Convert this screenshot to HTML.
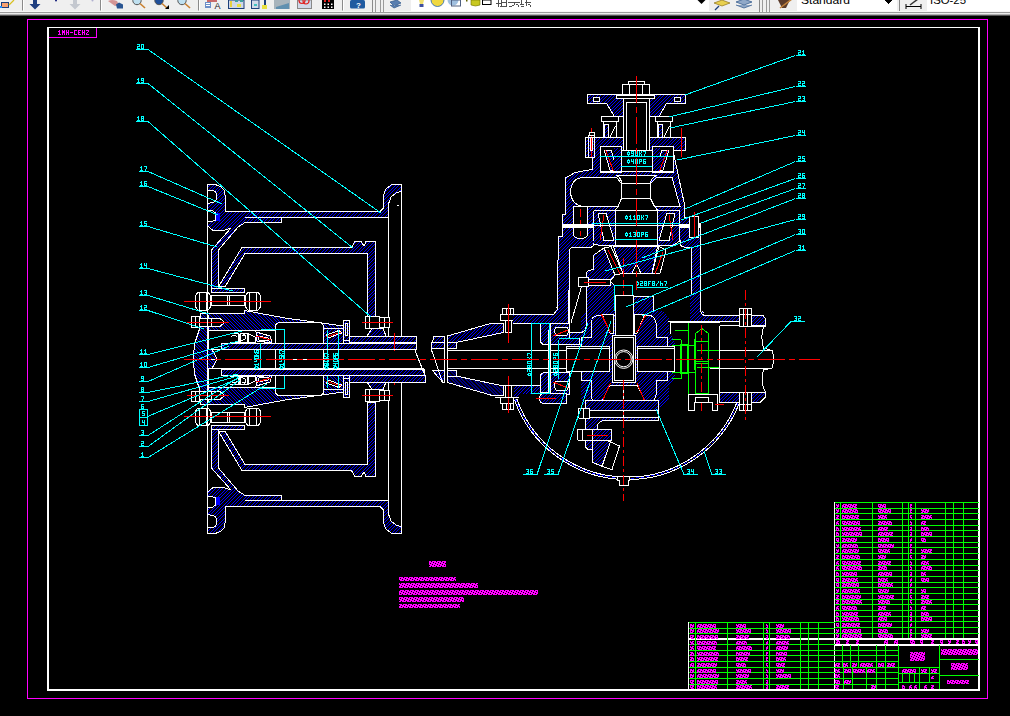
<!DOCTYPE html><html><head><meta charset="utf-8"><style>html,body{margin:0;padding:0;background:#000;overflow:hidden}svg{display:block}text{font-family:"Liberation Sans",sans-serif}</style></head><body>
<svg width="1010" height="716" viewBox="0 0 1010 716" shape-rendering="crispEdges">
<defs><pattern id="hb" patternUnits="userSpaceOnUse" width="7" height="7"><rect width="7" height="7" fill="#000"/><path d="M0,6h1v1h-1zM0,2h1v1h-1zM1,5h1v1h-1zM1,1h1v1h-1zM2,4h1v1h-1zM2,0h1v1h-1zM3,3h1v1h-1zM3,6h1v1h-1zM4,2h1v1h-1zM4,5h1v1h-1zM5,1h1v1h-1zM5,4h1v1h-1zM6,0h1v1h-1zM6,3h1v1h-1z" fill="#0000ff"/></pattern><pattern id="tm" patternUnits="userSpaceOnUse" width="5" height="5"><path d="M0,0h1v1h-1zM1,0h1v1h-1zM2,0h1v1h-1zM3,0h1v1h-1zM0,1h1v1h-1zM2,1h1v1h-1zM3,1h1v1h-1zM4,1h1v1h-1zM0,2h1v1h-1zM1,2h1v1h-1zM2,2h1v1h-1zM4,2h1v1h-1zM1,3h1v1h-1zM2,3h1v1h-1zM3,3h1v1h-1zM4,3h1v1h-1zM0,4h1v1h-1zM1,4h1v1h-1zM3,4h1v1h-1zM4,4h1v1h-1z" fill="#ff00ff"/></pattern><pattern id="hb2" patternUnits="userSpaceOnUse" width="7" height="7"><rect width="7" height="7" fill="#000"/><path d="M0,0h1v1h-1zM0,3h1v1h-1zM1,1h1v1h-1zM1,4h1v1h-1zM2,2h1v1h-1zM2,5h1v1h-1zM3,3h1v1h-1zM3,6h1v1h-1zM4,4h1v1h-1zM4,0h1v1h-1zM5,5h1v1h-1zM5,1h1v1h-1zM6,6h1v1h-1zM6,2h1v1h-1z" fill="#0000ff"/></pattern></defs>
<rect x="0" y="0" width="1010" height="716" fill="#000"/>
<rect x="0" y="0" width="1010" height="11" fill="#efefef"/>
<rect x="0" y="11" width="1010" height="1" fill="#f7f7f7"/>
<rect x="0" y="12" width="1010" height="1" fill="#9a9a9a"/>
<rect x="0" y="13" width="1010" height="1" fill="#ececec"/>
<rect x="0" y="14" width="1010" height="1" fill="#b0b0b0"/>
<rect x="0" y="15" width="1010" height="1" fill="#555555"/>
<g shape-rendering="auto">
<rect x="1" y="2" width="8" height="6" fill="#1c3f7a"/>
<rect x="2" y="3" width="6" height="4" fill="#f6a070"/>
<rect x="0" y="6" width="2" height="2" fill="#1e90ff"/>
<line x1="9" y1="5" x2="14" y2="0" stroke="#d8c020" stroke-width="1.2" />
<rect x="22" y="0" width="1" height="10.5" fill="#8a8a8a"/>
<rect x="23" y="0" width="1" height="10.5" fill="#ffffff"/>
<path d="M33,0 H37 V4 H40.5 L35,9.5 L29.5,4 H33 Z" fill="#1f3f80"/>
<circle cx="56" cy="0.5" r="1" fill="#1a237e"/>
<path d="M73,0 H77 V4 H80.5 L75,9.5 L69.5,4 H73 Z" fill="#c4c8cf"/>
<circle cx="92.5" cy="0.5" r="1" fill="#b0b0d0"/>
<rect x="100" y="0" width="1" height="10.5" fill="#8a8a8a"/>
<rect x="101" y="0" width="1" height="10.5" fill="#ffffff"/>
<path d="M108,1 Q112,-1 117,1 L119,5 L115,6 Z" fill="#d49595"/>
<path d="M116,4.5 L119,2.5 L123,4.5 L123,8.5 L117,8.5 Z" fill="#2a5592"/>
<circle cx="137" cy="0.5" r="4.2" fill="#bfe0f0" stroke="#555" stroke-width="1"/>
<line x1="140" y1="3.5" x2="145" y2="8" stroke="#c98030" stroke-width="1.6" />
<circle cx="159" cy="0.5" r="4.2" fill="#1f4f9a" stroke="#555" stroke-width="1"/>
<line x1="162" y1="3.5" x2="167" y2="8" stroke="#c98030" stroke-width="1.6" />
<circle cx="182" cy="0.5" r="4.2" fill="#bfe0f0" stroke="#555" stroke-width="1"/>
<line x1="185" y1="3.5" x2="190" y2="8" stroke="#c98030" stroke-width="1.6" />
<path d="M165,9 L169,5 L169,9 Z" fill="#000"/>
<rect x="198" y="0" width="1" height="10.5" fill="#8a8a8a"/>
<rect x="199" y="0" width="1" height="10.5" fill="#ffffff"/>
<rect x="205" y="2" width="6" height="6" fill="#6c8fc8"/>
<rect x="206" y="3" width="4" height="1" fill="#fff"/>
<rect x="206" y="5" width="4" height="1" fill="#fff"/>
<text x="214.5" y="9" font-size="9" fill="#222" font-family="Liberation Sans">A</text>
<rect x="207" y="0" width="10" height="2" fill="#c86a6a"/>
<rect x="228.5" y="0" width="15.5" height="8.5" stroke="#1c3f7a" fill="#d0d8e8"/>
<rect x="230" y="1" width="2" height="6" fill="#e8d040"/>
<rect x="237" y="4" width="4" height="3" fill="#e8e040"/>
<rect x="235" y="0" width="3" height="2" fill="#40a0a0"/>
<rect x="240" y="0" width="3" height="2" fill="#40a0a0"/>
<rect x="251.5" y="0" width="7.5" height="8.5" stroke="#1c3f7a" fill="#d0d8e8"/>
<rect x="254" y="4" width="3" height="2" fill="#40c0c0"/>
<rect x="262" y="5" width="5" height="4" fill="#e8e040"/>
<rect x="264" y="0" width="2" height="5" fill="#1c3f7a"/>
<rect x="274" y="0" width="16" height="9" fill="#a8b4bc"/>
<path d="M276,7 L289,3 L289,9 L276,9 Z" fill="#6090b0"/>
<rect x="297.5" y="0" width="14" height="8.5" stroke="#888" fill="#d0d8e8"/>
<circle cx="302" cy="0.5" r="3" fill="none" stroke="#e02020" stroke-width="1.2"/><circle cx="306" cy="1" r="3" fill="none" stroke="#e02020" stroke-width="1.2"/>
<rect x="322" y="0" width="12" height="9" fill="#000"/>
<rect x="324" y="0" width="2" height="2" fill="#e02020"/>
<rect x="328" y="0" width="2" height="2" fill="#e02020"/>
<rect x="324" y="3.5" width="1.5" height="1.5" fill="#fff"/>
<rect x="324" y="6.5" width="1.5" height="1.5" fill="#fff"/>
<rect x="327.5" y="3.5" width="1.5" height="1.5" fill="#fff"/>
<rect x="327.5" y="6.5" width="1.5" height="1.5" fill="#fff"/>
<rect x="331" y="3.5" width="1.5" height="1.5" fill="#fff"/>
<rect x="331" y="6.5" width="1.5" height="1.5" fill="#fff"/>
<rect x="342" y="0" width="1" height="10.5" fill="#8a8a8a"/>
<rect x="343" y="0" width="1" height="10.5" fill="#ffffff"/>
<rect x="350" y="0" width="15" height="8.5" rx="1.5" fill="#1f5aa0"/>
<text x="356" y="7.5" font-size="8" font-weight="bold" fill="#fff" font-family="Liberation Sans">?</text>
<rect x="372" y="0" width="1" height="12" fill="#8a8a8a"/>
<rect x="375" y="0" width="1" height="12" fill="#9a9a9a"/>
<rect x="380" y="0" width="1" height="12" fill="#9a9a9a"/>
<rect x="383" y="0" width="1" height="12" fill="#9a9a9a"/>
<path d="M390,2 L397,0 L401,3 L394,6 Z M390,5 L394,8 L401,5" fill="#5a7fb0" stroke="#3a5f90" stroke-width="0.8"/>
</g>
<rect x="411" y="0" width="298" height="11" fill="#ffffff"/>
<g shape-rendering="auto">
<path d="M419,0 H424 L423,4 H420 Z" fill="#f0e070"/>
<rect x="419.5" y="4" width="4" height="3" fill="#4050a0"/>
<circle cx="437.5" cy="0" r="6.5" fill="#f0d840" stroke="#2060b0" stroke-width="0.8"/>
<circle cx="453" cy="0" r="5.5" fill="#a0c0e0"/>
<rect x="451.5" y="0" width="9" height="6" stroke="#506080" fill="none"/>
<rect x="466" y="0" width="1.5" height="1.5" fill="#606000"/>
<path d="M471,0 H480 V5 Q475.5,7 471,5 Z" fill="#c8c820" stroke="#707000" stroke-width="0.6"/>
<rect x="482.5" y="0" width="8.5" height="4.5" stroke="#000" fill="#fff"/>
<g fill="#505050" shape-rendering="crispEdges"><rect x="498" y="0" width="1" height="6.5"/><rect x="496" y="3" width="5" height="1"/><rect x="501" y="0" width="1" height="6"/><rect x="506" y="0" width="1" height="6"/><rect x="501" y="2" width="6" height="1"/><rect x="500" y="6" width="7" height="1"/><rect x="508" y="2" width="12" height="1"/><rect x="509" y="6" width="3" height="1"/><rect x="512" y="5" width="2" height="1"/><rect x="514" y="3" width="1" height="2"/><rect x="516" y="4" width="2" height="1"/><rect x="518" y="5" width="1" height="2"/><rect x="521" y="0" width="1" height="4"/><rect x="520" y="4" width="4" height="1"/><rect x="521" y="6" width="3" height="1"/><rect x="525" y="2" width="6" height="1"/><rect x="526" y="0" width="1" height="6"/><rect x="528" y="4" width="2" height="1"/><rect x="530" y="5" width="1" height="2"/></g>
<path d="M697.5,0 H705.5 L701.5,4 Z" fill="#000"/>
<path d="M714,3 L722,0 L730,3 L722,6 Z" fill="#e8d050" stroke="#806000" stroke-width="0.6"/>
<line x1="715" y1="10" x2="719" y2="6" stroke="#1c3f7a" stroke-width="1.2" />
<path d="M736,2 L744,-1 L752,2 L744,5 Z M736,5 L744,8 L752,5" fill="#90a8c8" stroke="#3a5f90" stroke-width="0.8"/>
</g>
<rect x="759" y="0" width="1" height="12" fill="#8a8a8a"/>
<rect x="762" y="0" width="1" height="12" fill="#9a9a9a"/>
<rect x="766" y="0" width="1" height="12" fill="#9a9a9a"/>
<rect x="769" y="0" width="1" height="12" fill="#9a9a9a"/>
<g shape-rendering="auto">
<path d="M778,0 H790 L786,8 L782,8 Z" fill="#5a3a2a"/>
<line x1="780" y1="8" x2="792" y2="-1" stroke="#c0803a" stroke-width="1.5" />
</g>
<rect x="797" y="0" width="100" height="11" fill="#ffffff"/>
<text x="801" y="3.8" font-size="11" fill="#000" font-family="Liberation Mono" textLength="49" lengthAdjust="spacingAndGlyphs">Standard</text>
<path d="M884.5,0 H893 L888.8,4 Z" fill="#000"/>
<rect x="899" y="0" width="1" height="11" fill="#8a8a8a"/>
<g shape-rendering="auto">
<line x1="906" y1="6.5" x2="921" y2="6.5" stroke="#000" stroke-width="1" />
<line x1="906" y1="4" x2="906" y2="9" stroke="#000" stroke-width="1" />
<line x1="921" y1="4" x2="921" y2="9" stroke="#000" stroke-width="1" />
<line x1="910" y1="5" x2="918" y2="-1" stroke="#333" stroke-width="1.5" />
</g>
<rect x="927" y="0" width="83" height="11" fill="#ffffff"/>
<text x="930" y="3.8" font-size="11" fill="#000" font-family="Liberation Mono" textLength="36" lengthAdjust="spacingAndGlyphs">ISO-25</text>
<rect x="27.5" y="19.5" width="960" height="679" stroke="#ff00ff" fill="none"/>
<path d="M96.5,27 V37.5 H47" stroke="#ff00ff" fill="none"/>
<path d="M59,30h1v1h-1zM58,31h2v1h-2zM59,32h1v1h-1zM59,33h1v1h-1zM58,34h3v1h-3zM62,30h1v1h-1zM64,30h1v1h-1zM62,31h3v1h-3zM62,32h3v1h-3zM62,33h1v1h-1zM64,33h1v1h-1zM62,34h1v1h-1zM64,34h1v1h-1zM66,30h1v1h-1zM68,30h1v1h-1zM66,31h1v1h-1zM68,31h1v1h-1zM66,32h3v1h-3zM66,33h1v1h-1zM68,33h1v1h-1zM66,34h1v1h-1zM68,34h1v1h-1zM70,32h3v1h-3zM74,30h3v1h-3zM74,31h1v1h-1zM74,32h1v1h-1zM74,33h1v1h-1zM74,34h3v1h-3zM78,30h3v1h-3zM78,31h1v1h-1zM78,32h2v1h-2zM78,33h1v1h-1zM78,34h3v1h-3zM82,30h1v1h-1zM84,30h1v1h-1zM82,31h1v1h-1zM84,31h1v1h-1zM82,32h3v1h-3zM82,33h1v1h-1zM84,33h1v1h-1zM82,34h1v1h-1zM84,34h1v1h-1zM86,30h3v1h-3zM88,31h1v1h-1zM87,32h1v1h-1zM86,33h1v1h-1zM86,34h3v1h-3z" fill="#ff00ff"/>
<rect x="47" y="27" width="933" height="1" fill="#ffffff"/>
<rect x="47" y="27" width="2" height="664" fill="#ffffff"/>
<rect x="978" y="27" width="2" height="664" fill="#ffffff"/>
<rect x="47" y="689" width="933" height="2" fill="#ffffff"/>
<g>
<path d="M207.5,184.5 L215.5,184.5 L221,187 L224,190 L225,195 L225,211.5 L380,211.5 L383.5,208 L383.5,195 L386,189 L391,185 L401.5,184.5 L401.5,191 L396,193 L391,197 L388.5,204 L388.5,217.5 L281.5,217.5 L281.5,222.5 L245,222.5 L238,227 L218.5,250 L218.5,292 L211.5,292 L211.5,250 L231,228 L224,230.5 L213,230.5 L207.5,226 Z" stroke="#ffffff" fill="url(#hb)"/>
<path d="M207.5,190.5 L212,190.5 Q217,191 217,196.5 Q217,202 212,202.5 L207.5,203.5 Z" fill="#000" stroke="#fff"/>
<path d="M207.5,210.5 L212,210.5 L215.5,213 L215.5,220 L212,221.5 L207.5,221.5 Z" fill="#000" stroke="#fff"/>
<rect x="216" y="213" width="4" height="8" fill="#0000ff"/>
<line x1="245" y1="217.5" x2="281.5" y2="217.5" stroke="#ffffff" stroke-width="1" />
<line x1="388.5" y1="204" x2="388.5" y2="336" stroke="#ffffff" stroke-width="1" />
<line x1="401.5" y1="184.5" x2="401.5" y2="336" stroke="#ffffff" stroke-width="1" />
<path d="M218.9,286 L241.9,247.5 L351.5,247.5 L355,241.5 L361,241.5 L364,246 L366,241.5 L375.5,241.5 L375.5,316 L367.5,316 L367.5,253.5 L245,253.5 L225,287 Z" stroke="#ffffff" fill="url(#hb)"/>
<path d="M211.5,288.5 L244.5,288.5 L244.5,292.5 L211.5,292.5 Z" stroke="#ffffff" fill="url(#hb)"/>
<path d="M200.5,313.5 L244.5,313.5 L244.5,310.5 L285,318 L343.5,326 L343.5,336 L349,336 L349,343 L221,343 L221,349.5 L212,349.5 L217,359 L193.2,359 L194.5,344 L199.5,329 Z" fill="url(#hb2)" stroke="#fff"/>
<path d="M275.5,359 L275.5,327 Q275.5,322.5 280,322.5 L319,322.5 Q323.5,322.5 323.5,327 L323.5,359 Z" fill="#000" stroke="#fff"/>
<path d="M208.5,330.5 L275.5,330.5 L275.5,343 L221,343 L221,349.5 L208.5,349.5 Z" fill="#000" stroke="#fff"/>
<line x1="208.5" y1="315" x2="208.5" y2="349.5" stroke="#ffffff" stroke-width="1" />
<path d="M229.5,333.5 H238 V342 H229.5 M231,336.5 Q234,334 237,336.5 M240,333.5 H247 V342 H240 M242,336 Q245,333 246,338 Q244,341 241,340 M248.5,334 L255,337 L255,342 L248.5,342 Z" fill="none" stroke="#fff"/>
<rect x="239" y="334" width="1" height="8" stroke="#ffffff" fill="url(#hb)"/>
<path d="M256,332 L270,336 L272,343 L257,341 Z" fill="url(#hb)" stroke="#fff"/>
<path d="M258,336 L268,338 L269,341 L259,340 Z" fill="#000" stroke="#fff"/>
<line x1="256" y1="336" x2="271" y2="340" stroke="#ff0000" stroke-width="1" />
<path d="M343.5,320.5 L349.5,320.5 L349.5,340 L343.5,340 Z" fill="url(#hb)" stroke="#fff"/>
<rect x="345.5" y="323.5" width="2" height="12" stroke="#ffffff" fill="none"/>
<rect x="349.5" y="336" width="67" height="6.5" stroke="#ffffff" fill="url(#hb)"/>
<rect x="221" y="343" width="195.5" height="6.5" stroke="#ffffff" fill="url(#hb)"/>
<path d="M323.5,328.5 L343.5,328.5 L343.5,343 L323.5,343 Z" fill="url(#hb)" stroke="#fff"/>
<path d="M326,335 L339,330.5 L342,333 L328,338 Z" fill="#000" stroke="#fff"/>
<line x1="326" y1="337" x2="341" y2="332" stroke="#ff0000" stroke-width="1" />
<path d="M198,292.5 L208,292.5 Q211,294 211,301.2 Q211,308.5 208,310 L198,310 Q195,308.5 195,301.2 Q195,294 198,292.5 Z" fill="#000" stroke="#fff"/>
<line x1="199.5" y1="292.5" x2="199.5" y2="310" stroke="#ffffff" stroke-width="1" />
<line x1="206.5" y1="292.5" x2="206.5" y2="310" stroke="#ffffff" stroke-width="1" />
<rect x="211.5" y="295.5" width="33" height="10" stroke="#ffffff" fill="#000"/>
<line x1="227.5" y1="295.5" x2="227.5" y2="305.5" stroke="#ffffff" stroke-width="1" />
<line x1="229.5" y1="295.5" x2="229.5" y2="305.5" stroke="#ffffff" stroke-width="1" />
<path d="M248,292.5 L258,292.5 Q261,294 261,301.2 Q261,308.5 258,310 L248,310 Q245,308.5 245,301.2 Q245,294 248,292.5 Z" fill="#000" stroke="#fff"/>
<line x1="249.5" y1="292.5" x2="249.5" y2="310" stroke="#ffffff" stroke-width="1" />
<line x1="256.5" y1="292.5" x2="256.5" y2="310" stroke="#ffffff" stroke-width="1" />
<line x1="184" y1="301.5" x2="271" y2="301.5" stroke="#ff0000" stroke-width="1" />
<rect x="191.5" y="316.5" width="8" height="10.5" stroke="#ffffff" fill="#000"/>
<line x1="195.5" y1="316.5" x2="195.5" y2="327" stroke="#ffffff" stroke-width="1" />
<path d="M199.5,318.5 L220,318.5 L224.5,322.5 L220,326.5 L199.5,326.5 Z" fill="#000" stroke="#fff"/>
<line x1="211.5" y1="318.5" x2="211.5" y2="326.5" stroke="#ffffff" stroke-width="1" />
<line x1="187" y1="322.5" x2="229" y2="322.5" stroke="#ff0000" stroke-width="1" />
<rect x="365.5" y="316.5" width="13.5" height="12" stroke="#ffffff" fill="#000"/>
<rect x="379" y="317.5" width="10" height="10" stroke="#ffffff" fill="#000"/>
<line x1="369.5" y1="316.5" x2="369.5" y2="328.5" stroke="#ffffff" stroke-width="1" />
<line x1="384.5" y1="317.5" x2="384.5" y2="327.5" stroke="#ffffff" stroke-width="1" />
<line x1="362" y1="322.5" x2="393" y2="322.5" stroke="#ff0000" stroke-width="1" />
<path d="M367,336 L372,328.5 L383,328.5 L386,336 Z" stroke="#ffffff" fill="url(#hb)"/>
<line x1="394.5" y1="333" x2="394.5" y2="350.5" stroke="#ff0000" stroke-width="1" />
<line x1="260.5" y1="329.5" x2="284.5" y2="329.5" stroke="#00ffff" stroke-width="1" />
<line x1="260.5" y1="343" x2="260.5" y2="359" stroke="#00ffff" stroke-width="1" />
<line x1="284.5" y1="330" x2="284.5" y2="359" stroke="#00ffff" stroke-width="1" />
<line x1="327.5" y1="330" x2="327.5" y2="359" stroke="#00ffff" stroke-width="1" />
<line x1="338.5" y1="330" x2="338.5" y2="359" stroke="#00ffff" stroke-width="1" />
</g><g transform="matrix(1 0 0 -1 0 718)">
<path d="M207.5,184.5 L215.5,184.5 L221,187 L224,190 L225,195 L225,211.5 L380,211.5 L383.5,208 L383.5,195 L386,189 L391,185 L401.5,184.5 L401.5,191 L396,193 L391,197 L388.5,204 L388.5,217.5 L281.5,217.5 L281.5,222.5 L245,222.5 L238,227 L218.5,250 L218.5,292 L211.5,292 L211.5,250 L231,228 L224,230.5 L213,230.5 L207.5,226 Z" stroke="#ffffff" fill="url(#hb2)"/>
<path d="M207.5,190.5 L212,190.5 Q217,191 217,196.5 Q217,202 212,202.5 L207.5,203.5 Z" fill="#000" stroke="#fff"/>
<path d="M207.5,210.5 L212,210.5 L215.5,213 L215.5,220 L212,221.5 L207.5,221.5 Z" fill="#000" stroke="#fff"/>
<rect x="216" y="213" width="4" height="8" fill="#0000ff"/>
<line x1="245" y1="217.5" x2="281.5" y2="217.5" stroke="#ffffff" stroke-width="1" />
<line x1="388.5" y1="204" x2="388.5" y2="336" stroke="#ffffff" stroke-width="1" />
<line x1="401.5" y1="184.5" x2="401.5" y2="336" stroke="#ffffff" stroke-width="1" />
<path d="M218.9,286 L241.9,247.5 L351.5,247.5 L355,241.5 L361,241.5 L364,246 L366,241.5 L375.5,241.5 L375.5,316 L367.5,316 L367.5,253.5 L245,253.5 L225,287 Z" stroke="#ffffff" fill="url(#hb2)"/>
<path d="M211.5,288.5 L244.5,288.5 L244.5,292.5 L211.5,292.5 Z" stroke="#ffffff" fill="url(#hb2)"/>
<path d="M200.5,313.5 L244.5,313.5 L244.5,310.5 L285,318 L343.5,326 L343.5,336 L349,336 L349,343 L221,343 L221,349.5 L212,349.5 L217,359 L193.2,359 L194.5,344 L199.5,329 Z" fill="url(#hb)" stroke="#fff"/>
<path d="M275.5,359 L275.5,327 Q275.5,322.5 280,322.5 L319,322.5 Q323.5,322.5 323.5,327 L323.5,359 Z" fill="#000" stroke="#fff"/>
<path d="M208.5,330.5 L275.5,330.5 L275.5,343 L221,343 L221,349.5 L208.5,349.5 Z" fill="#000" stroke="#fff"/>
<line x1="208.5" y1="315" x2="208.5" y2="349.5" stroke="#ffffff" stroke-width="1" />
<path d="M229.5,333.5 H238 V342 H229.5 M231,336.5 Q234,334 237,336.5 M240,333.5 H247 V342 H240 M242,336 Q245,333 246,338 Q244,341 241,340 M248.5,334 L255,337 L255,342 L248.5,342 Z" fill="none" stroke="#fff"/>
<rect x="239" y="334" width="1" height="8" stroke="#ffffff" fill="url(#hb2)"/>
<path d="M256,332 L270,336 L272,343 L257,341 Z" fill="url(#hb)" stroke="#fff"/>
<path d="M258,336 L268,338 L269,341 L259,340 Z" fill="#000" stroke="#fff"/>
<line x1="256" y1="336" x2="271" y2="340" stroke="#ff0000" stroke-width="1" />
<path d="M343.5,320.5 L349.5,320.5 L349.5,340 L343.5,340 Z" fill="url(#hb)" stroke="#fff"/>
<rect x="345.5" y="323.5" width="2" height="12" stroke="#ffffff" fill="none"/>
<rect x="349.5" y="336" width="67" height="6.5" stroke="#ffffff" fill="url(#hb2)"/>
<rect x="221" y="343" width="195.5" height="6.5" stroke="#ffffff" fill="url(#hb2)"/>
<path d="M323.5,328.5 L343.5,328.5 L343.5,343 L323.5,343 Z" fill="url(#hb)" stroke="#fff"/>
<path d="M326,335 L339,330.5 L342,333 L328,338 Z" fill="#000" stroke="#fff"/>
<line x1="326" y1="337" x2="341" y2="332" stroke="#ff0000" stroke-width="1" />
<path d="M198,292.5 L208,292.5 Q211,294 211,301.2 Q211,308.5 208,310 L198,310 Q195,308.5 195,301.2 Q195,294 198,292.5 Z" fill="#000" stroke="#fff"/>
<line x1="199.5" y1="292.5" x2="199.5" y2="310" stroke="#ffffff" stroke-width="1" />
<line x1="206.5" y1="292.5" x2="206.5" y2="310" stroke="#ffffff" stroke-width="1" />
<rect x="211.5" y="295.5" width="33" height="10" stroke="#ffffff" fill="#000"/>
<line x1="227.5" y1="295.5" x2="227.5" y2="305.5" stroke="#ffffff" stroke-width="1" />
<line x1="229.5" y1="295.5" x2="229.5" y2="305.5" stroke="#ffffff" stroke-width="1" />
<path d="M248,292.5 L258,292.5 Q261,294 261,301.2 Q261,308.5 258,310 L248,310 Q245,308.5 245,301.2 Q245,294 248,292.5 Z" fill="#000" stroke="#fff"/>
<line x1="249.5" y1="292.5" x2="249.5" y2="310" stroke="#ffffff" stroke-width="1" />
<line x1="256.5" y1="292.5" x2="256.5" y2="310" stroke="#ffffff" stroke-width="1" />
<line x1="184" y1="301.5" x2="271" y2="301.5" stroke="#ff0000" stroke-width="1" />
<rect x="191.5" y="316.5" width="8" height="10.5" stroke="#ffffff" fill="#000"/>
<line x1="195.5" y1="316.5" x2="195.5" y2="327" stroke="#ffffff" stroke-width="1" />
<path d="M199.5,318.5 L220,318.5 L224.5,322.5 L220,326.5 L199.5,326.5 Z" fill="#000" stroke="#fff"/>
<line x1="211.5" y1="318.5" x2="211.5" y2="326.5" stroke="#ffffff" stroke-width="1" />
<line x1="187" y1="322.5" x2="229" y2="322.5" stroke="#ff0000" stroke-width="1" />
<rect x="365.5" y="316.5" width="13.5" height="12" stroke="#ffffff" fill="#000"/>
<rect x="379" y="317.5" width="10" height="10" stroke="#ffffff" fill="#000"/>
<line x1="369.5" y1="316.5" x2="369.5" y2="328.5" stroke="#ffffff" stroke-width="1" />
<line x1="384.5" y1="317.5" x2="384.5" y2="327.5" stroke="#ffffff" stroke-width="1" />
<line x1="362" y1="322.5" x2="393" y2="322.5" stroke="#ff0000" stroke-width="1" />
<path d="M367,336 L372,328.5 L383,328.5 L386,336 Z" stroke="#ffffff" fill="url(#hb2)"/>
<line x1="394.5" y1="333" x2="394.5" y2="350.5" stroke="#ff0000" stroke-width="1" />
<line x1="260.5" y1="329.5" x2="284.5" y2="329.5" stroke="#00ffff" stroke-width="1" />
<line x1="260.5" y1="343" x2="260.5" y2="359" stroke="#00ffff" stroke-width="1" />
<line x1="284.5" y1="330" x2="284.5" y2="359" stroke="#00ffff" stroke-width="1" />
<line x1="327.5" y1="330" x2="327.5" y2="359" stroke="#00ffff" stroke-width="1" />
<line x1="338.5" y1="330" x2="338.5" y2="359" stroke="#00ffff" stroke-width="1" />
</g>
<line x1="207.5" y1="184.5" x2="207.5" y2="534" stroke="#ffffff" stroke-width="1" />
<rect x="397" y="205" width="2" height="1" fill="#ffffff"/>
<line x1="216" y1="349.5" x2="416" y2="349.5" stroke="#ffffff" stroke-width="1" />
<line x1="216" y1="368.5" x2="424" y2="368.5" stroke="#ffffff" stroke-width="1" />
<rect x="349.5" y="375.5" width="75.5" height="6.5" stroke="#ffffff" fill="url(#hb)"/>
<rect x="221" y="369" width="203.5" height="6.5" stroke="#ffffff" fill="url(#hb)"/>
<line x1="415" y1="350.5" x2="425" y2="375.5" stroke="#ffffff" stroke-width="1" />
<line x1="184" y1="359.5" x2="820" y2="359.5" stroke="#ff0000" stroke-dasharray="27,4,6,4"/>
<path d="M1,0h1v1h-1zM0,1h3v1h-3zM0,2h1v1h-1zM2,2h1v1h-1zM0,3h3v1h-3zM1,4h1v1h-1zM4.3,0h1v1h-1zM3.3,1h2v1h-2zM4.3,2h1v1h-1zM4.3,3h1v1h-1zM3.3,4h3v1h-3zM6.6,0h1v1h-1zM8.6,0h1v1h-1zM6.6,1h1v1h-1zM8.6,1h1v1h-1zM6.6,2h3v1h-3zM8.6,3h1v1h-1zM8.6,4h1v1h-1zM9.899999999999999,0h3v1h-3zM9.899999999999999,1h1v1h-1zM11.899999999999999,1h1v1h-1zM9.899999999999999,2h1v1h-1zM11.899999999999999,2h1v1h-1zM9.899999999999999,3h1v1h-1zM11.899999999999999,3h1v1h-1zM9.899999999999999,4h3v1h-3zM13.2,0h1v1h-1zM13.2,1h1v1h-1zM15.2,1h1v1h-1zM13.2,2h2v1h-2zM13.2,3h1v1h-1zM15.2,3h1v1h-1zM13.2,4h1v1h-1zM15.2,4h1v1h-1zM16.5,0h3v1h-3zM16.5,1h1v1h-1zM16.5,2h3v1h-3zM16.5,3h1v1h-1zM18.5,3h1v1h-1zM16.5,4h3v1h-3z" fill="#00ffff" transform="translate(254,369) rotate(-90)"/>
<path d="M1,0h1v1h-1zM0,1h3v1h-3zM0,2h1v1h-1zM2,2h1v1h-1zM0,3h3v1h-3zM1,4h1v1h-1zM4.3,0h1v1h-1zM3.3,1h2v1h-2zM4.3,2h1v1h-1zM4.3,3h1v1h-1zM3.3,4h3v1h-3zM6.6,0h1v1h-1zM8.6,0h1v1h-1zM6.6,1h1v1h-1zM8.6,1h1v1h-1zM6.6,2h3v1h-3zM8.6,3h1v1h-1zM8.6,4h1v1h-1zM9.899999999999999,0h3v1h-3zM9.899999999999999,1h1v1h-1zM9.899999999999999,2h3v1h-3zM11.899999999999999,3h1v1h-1zM9.899999999999999,4h3v1h-3zM13.2,0h1v1h-1zM15.2,0h1v1h-1zM13.2,1h1v1h-1zM15.2,1h1v1h-1zM13.2,2h2v1h-2zM13.2,3h1v1h-1zM15.2,3h1v1h-1zM13.2,4h1v1h-1zM15.2,4h1v1h-1zM16.5,0h3v1h-3zM18.5,1h1v1h-1zM18.5,2h1v1h-1zM17.5,3h1v1h-1zM17.5,4h1v1h-1z" fill="#00ffff" transform="translate(279,369) rotate(-90)"/>
<path d="M1,0h1v1h-1zM0,1h3v1h-3zM0,2h1v1h-1zM2,2h1v1h-1zM0,3h3v1h-3zM1,4h1v1h-1zM3.3,0h3v1h-3zM3.3,1h1v1h-1zM5.3,1h1v1h-1zM3.3,2h3v1h-3zM3.3,3h1v1h-1zM5.3,3h1v1h-1zM3.3,4h3v1h-3zM6.6,0h3v1h-3zM6.6,1h1v1h-1zM8.6,1h1v1h-1zM6.6,2h1v1h-1zM8.6,2h1v1h-1zM6.6,3h1v1h-1zM8.6,3h1v1h-1zM6.6,4h3v1h-3zM9.899999999999999,0h1v1h-1zM11.899999999999999,0h1v1h-1zM9.899999999999999,1h1v1h-1zM11.899999999999999,1h1v1h-1zM9.899999999999999,2h2v1h-2zM9.899999999999999,3h1v1h-1zM11.899999999999999,3h1v1h-1zM9.899999999999999,4h1v1h-1zM11.899999999999999,4h1v1h-1zM13.2,0h3v1h-3zM15.2,1h1v1h-1zM15.2,2h1v1h-1zM14.2,3h1v1h-1zM14.2,4h1v1h-1z" fill="#00ffff" transform="translate(324,369) rotate(-90)"/>
<path d="M1,0h1v1h-1zM0,1h3v1h-3zM0,2h1v1h-1zM2,2h1v1h-1zM0,3h3v1h-3zM1,4h1v1h-1zM3.3,0h1v1h-1zM5.3,0h1v1h-1zM3.3,1h1v1h-1zM5.3,1h1v1h-1zM3.3,2h3v1h-3zM5.3,3h1v1h-1zM5.3,4h1v1h-1zM6.6,0h3v1h-3zM6.6,1h1v1h-1zM8.6,1h1v1h-1zM6.6,2h1v1h-1zM8.6,2h1v1h-1zM6.6,3h1v1h-1zM8.6,3h1v1h-1zM6.6,4h3v1h-3zM9.899999999999999,0h3v1h-3zM9.899999999999999,1h1v1h-1zM11.899999999999999,1h1v1h-1zM9.899999999999999,2h3v1h-3zM9.899999999999999,3h1v1h-1zM9.899999999999999,4h1v1h-1zM13.2,0h3v1h-3zM13.2,1h1v1h-1zM13.2,2h3v1h-3zM13.2,3h1v1h-1zM15.2,3h1v1h-1zM13.2,4h3v1h-3z" fill="#00ffff" transform="translate(333,369) rotate(-90)"/>
<line x1="136" y1="49.5" x2="148.5" y2="49.5" stroke="#00ffff" stroke-width="1" />
<path d="M137,44h3v1h-3zM139,45h1v1h-1zM137,46h3v1h-3zM137,47h1v1h-1zM137,48h3v1h-3zM141,44h3v1h-3zM141,45h1v1h-1zM143,45h1v1h-1zM141,46h1v1h-1zM143,46h1v1h-1zM141,47h1v1h-1zM143,47h1v1h-1zM141,48h3v1h-3z" fill="#00ffff"/>
<line x1="148" y1="49.5" x2="381" y2="213" stroke="#00ffff" stroke-width="1" />
<line x1="136" y1="83.5" x2="148.5" y2="83.5" stroke="#00ffff" stroke-width="1" />
<path d="M138,78h1v1h-1zM137,79h2v1h-2zM138,80h1v1h-1zM138,81h1v1h-1zM137,82h3v1h-3zM141,78h3v1h-3zM141,79h1v1h-1zM143,79h1v1h-1zM141,80h3v1h-3zM143,81h1v1h-1zM141,82h3v1h-3z" fill="#00ffff"/>
<line x1="148" y1="83.5" x2="353" y2="248" stroke="#00ffff" stroke-width="1" />
<line x1="136" y1="121.5" x2="148.5" y2="121.5" stroke="#00ffff" stroke-width="1" />
<path d="M138,116h1v1h-1zM137,117h2v1h-2zM138,118h1v1h-1zM138,119h1v1h-1zM137,120h3v1h-3zM141,116h3v1h-3zM141,117h1v1h-1zM143,117h1v1h-1zM141,118h3v1h-3zM141,119h1v1h-1zM143,119h1v1h-1zM141,120h3v1h-3z" fill="#00ffff"/>
<line x1="148" y1="121.5" x2="371" y2="317" stroke="#00ffff" stroke-width="1" />
<line x1="139" y1="171.5" x2="148.5" y2="171.5" stroke="#00ffff" stroke-width="1" />
<path d="M141,166h1v1h-1zM140,167h2v1h-2zM141,168h1v1h-1zM141,169h1v1h-1zM140,170h3v1h-3zM144,166h3v1h-3zM146,167h1v1h-1zM146,168h1v1h-1zM145,169h1v1h-1zM145,170h1v1h-1z" fill="#00ffff"/>
<line x1="148" y1="171.5" x2="222" y2="204" stroke="#00ffff" stroke-width="1" />
<line x1="139" y1="186.5" x2="148.5" y2="186.5" stroke="#00ffff" stroke-width="1" />
<path d="M141,181h1v1h-1zM140,182h2v1h-2zM141,183h1v1h-1zM141,184h1v1h-1zM140,185h3v1h-3zM144,181h3v1h-3zM144,182h1v1h-1zM144,183h3v1h-3zM144,184h1v1h-1zM146,184h1v1h-1zM144,185h3v1h-3z" fill="#00ffff"/>
<line x1="148" y1="186.5" x2="218" y2="215" stroke="#00ffff" stroke-width="1" />
<line x1="139" y1="226.5" x2="148.5" y2="226.5" stroke="#00ffff" stroke-width="1" />
<path d="M141,221h1v1h-1zM140,222h2v1h-2zM141,223h1v1h-1zM141,224h1v1h-1zM140,225h3v1h-3zM144,221h3v1h-3zM144,222h1v1h-1zM144,223h3v1h-3zM146,224h1v1h-1zM144,225h3v1h-3z" fill="#00ffff"/>
<line x1="148" y1="226.5" x2="217" y2="247" stroke="#00ffff" stroke-width="1" />
<line x1="139" y1="268.5" x2="148.5" y2="268.5" stroke="#00ffff" stroke-width="1" />
<path d="M141,263h1v1h-1zM140,264h2v1h-2zM141,265h1v1h-1zM141,266h1v1h-1zM140,267h3v1h-3zM144,263h1v1h-1zM146,263h1v1h-1zM144,264h1v1h-1zM146,264h1v1h-1zM144,265h3v1h-3zM146,266h1v1h-1zM146,267h1v1h-1z" fill="#00ffff"/>
<line x1="148" y1="268.5" x2="233" y2="291" stroke="#00ffff" stroke-width="1" />
<line x1="139" y1="295.5" x2="148.5" y2="295.5" stroke="#00ffff" stroke-width="1" />
<path d="M141,290h1v1h-1zM140,291h2v1h-2zM141,292h1v1h-1zM141,293h1v1h-1zM140,294h3v1h-3zM144,290h3v1h-3zM146,291h1v1h-1zM145,292h2v1h-2zM146,293h1v1h-1zM144,294h3v1h-3z" fill="#00ffff"/>
<line x1="148" y1="295.5" x2="209" y2="314" stroke="#00ffff" stroke-width="1" />
<line x1="139" y1="310.5" x2="148.5" y2="310.5" stroke="#00ffff" stroke-width="1" />
<path d="M141,305h1v1h-1zM140,306h2v1h-2zM141,307h1v1h-1zM141,308h1v1h-1zM140,309h3v1h-3zM144,305h3v1h-3zM146,306h1v1h-1zM144,307h3v1h-3zM144,308h1v1h-1zM144,309h3v1h-3z" fill="#00ffff"/>
<line x1="148" y1="310.5" x2="204" y2="329" stroke="#00ffff" stroke-width="1" />
<line x1="139" y1="354.5" x2="148.5" y2="354.5" stroke="#00ffff" stroke-width="1" />
<path d="M141,349h1v1h-1zM140,350h2v1h-2zM141,351h1v1h-1zM141,352h1v1h-1zM140,353h3v1h-3zM145,349h1v1h-1zM144,350h2v1h-2zM145,351h1v1h-1zM145,352h1v1h-1zM144,353h3v1h-3z" fill="#00ffff"/>
<line x1="148" y1="354.5" x2="242" y2="331" stroke="#00ffff" stroke-width="1" />
<line x1="139" y1="367.5" x2="148.5" y2="367.5" stroke="#00ffff" stroke-width="1" />
<path d="M141,362h1v1h-1zM140,363h2v1h-2zM141,364h1v1h-1zM141,365h1v1h-1zM140,366h3v1h-3zM144,362h3v1h-3zM144,363h1v1h-1zM146,363h1v1h-1zM144,364h1v1h-1zM146,364h1v1h-1zM144,365h1v1h-1zM146,365h1v1h-1zM144,366h3v1h-3z" fill="#00ffff"/>
<line x1="148" y1="367.5" x2="238" y2="341" stroke="#00ffff" stroke-width="1" />
<line x1="139" y1="381.5" x2="148.5" y2="381.5" stroke="#00ffff" stroke-width="1" />
<path d="M141,376h3v1h-3zM141,377h1v1h-1zM143,377h1v1h-1zM141,378h3v1h-3zM143,379h1v1h-1zM141,380h3v1h-3z" fill="#00ffff"/>
<line x1="148" y1="381.5" x2="229" y2="346" stroke="#00ffff" stroke-width="1" />
<line x1="139" y1="392.5" x2="148.5" y2="392.5" stroke="#00ffff" stroke-width="1" />
<path d="M141,387h3v1h-3zM141,388h1v1h-1zM143,388h1v1h-1zM141,389h3v1h-3zM141,390h1v1h-1zM143,390h1v1h-1zM141,391h3v1h-3z" fill="#00ffff"/>
<line x1="148" y1="392.5" x2="238" y2="374" stroke="#00ffff" stroke-width="1" />
<line x1="139" y1="401.5" x2="148.5" y2="401.5" stroke="#00ffff" stroke-width="1" />
<path d="M141,396h3v1h-3zM143,397h1v1h-1zM143,398h1v1h-1zM142,399h1v1h-1zM142,400h1v1h-1z" fill="#00ffff"/>
<line x1="148" y1="401.5" x2="238" y2="376" stroke="#00ffff" stroke-width="1" />
<line x1="139" y1="435.5" x2="148.5" y2="435.5" stroke="#00ffff" stroke-width="1" />
<path d="M141,430h3v1h-3zM143,431h1v1h-1zM142,432h2v1h-2zM143,433h1v1h-1zM141,434h3v1h-3z" fill="#00ffff"/>
<line x1="148" y1="435.5" x2="239" y2="377" stroke="#00ffff" stroke-width="1" />
<line x1="139" y1="446.5" x2="148.5" y2="446.5" stroke="#00ffff" stroke-width="1" />
<path d="M141,441h3v1h-3zM143,442h1v1h-1zM141,443h3v1h-3zM141,444h1v1h-1zM141,445h3v1h-3z" fill="#00ffff"/>
<line x1="148" y1="446.5" x2="240" y2="380" stroke="#00ffff" stroke-width="1" />
<line x1="139" y1="457.5" x2="148.5" y2="457.5" stroke="#00ffff" stroke-width="1" />
<path d="M142,452h1v1h-1zM141,453h2v1h-2zM142,454h1v1h-1zM142,455h1v1h-1zM141,456h3v1h-3z" fill="#00ffff"/>
<line x1="148" y1="457.5" x2="267" y2="384" stroke="#00ffff" stroke-width="1" />
<rect x="139.5" y="409.5" width="8" height="16" stroke="#00ffff" fill="none"/>
<line x1="139.5" y1="417.5" x2="147.5" y2="417.5" stroke="#00ffff" stroke-width="1" />
<path d="M141,404h3v1h-3zM141,405h1v1h-1zM141,406h3v1h-3zM141,407h1v1h-1zM143,407h1v1h-1zM141,408h3v1h-3z" fill="#00ffff"/>
<path d="M142,411h3v1h-3zM142,412h1v1h-1zM142,413h3v1h-3zM144,414h1v1h-1zM142,415h3v1h-3z" fill="#00ffff"/>
<path d="M142,419.5h1v1h-1zM144,419.5h1v1h-1zM142,420.5h1v1h-1zM144,420.5h1v1h-1zM142,421.5h3v1h-3zM144,422.5h1v1h-1zM144,423.5h1v1h-1z" fill="#00ffff"/>
<line x1="147.5" y1="416.5" x2="238" y2="378.6" stroke="#00ffff" stroke-width="1" />
<rect x="628.5" y="81.5" width="16" height="3" stroke="#ffffff" fill="#000"/>
<rect x="622.5" y="84.5" width="27" height="11" stroke="#ffffff" fill="#000"/>
<line x1="629.5" y1="84.5" x2="629.5" y2="95.5" stroke="#ffffff" stroke-width="1" />
<line x1="642.5" y1="84.5" x2="642.5" y2="95.5" stroke="#ffffff" stroke-width="1" />
<path d="M587.5,94.5 L685.5,94.5 L685.5,103.5 L666.5,103.5 L659,116.5 L649.5,116.5 L649.5,98.5 L623.5,98.5 L623.5,116.5 L614.5,116.5 L606.5,103.5 L587.5,103.5 Z" stroke="#ffffff" fill="url(#hb)"/>
<rect x="616.5" y="95.5" width="38" height="3" stroke="#ffffff" fill="#000"/>
<rect x="593.5" y="97.5" width="6" height="4" stroke="#ffffff" fill="#000"/>
<rect x="674.5" y="97.5" width="6" height="4" stroke="#ffffff" fill="#000"/>
<path d="M623.5,98.5 L649.5,98.5 L649.5,150.5 L623.5,150.5 Z" fill="#000" stroke="#fff"/>
<line x1="626.5" y1="102" x2="626.5" y2="150.5" stroke="#ffffff" stroke-width="1" />
<line x1="646.5" y1="102" x2="646.5" y2="150.5" stroke="#ffffff" stroke-width="1" />
<line x1="626.5" y1="102.5" x2="646.5" y2="102.5" stroke="#ffffff" stroke-width="1" />
<rect x="601.5" y="116.5" width="17" height="5" stroke="#ffffff" fill="#000"/>
<rect x="603.5" y="121.5" width="13" height="20" stroke="#ffffff" fill="#000"/>
<rect x="604.5" y="124" width="4" height="16" stroke="#ffffff" fill="url(#hb)"/>
<line x1="608.5" y1="140" x2="615.5" y2="126" stroke="#ffffff" stroke-width="1" />
<rect x="655.5" y="116.5" width="17" height="5" stroke="#ffffff" fill="#000"/>
<rect x="657.5" y="121.5" width="13" height="20" stroke="#ffffff" fill="#000"/>
<rect x="658.5" y="124" width="4" height="16" stroke="#ffffff" fill="url(#hb)"/>
<line x1="662.5" y1="140" x2="669.5" y2="126" stroke="#ffffff" stroke-width="1" />
<path d="M585.5,137.5 L685.5,137.5 L685.5,150.5 L673,150.5 L684.5,204.5 L684.5,217.5 L689.5,217.5 L689.5,223.5 L700.5,223.5 L700.5,309 L706,317 L712,320.5 L719,320.5 L719,322.5 L670,322.5 L670,336 L570,336 L569.5,322 L557,308 L558.5,236.5 L562,236.5 L562,214.5 L565.5,214.5 L565.5,178 L575,172.5 L592,169.5 L592,157 L585.5,157 Z" stroke="#ffffff" fill="url(#hb)"/>
<path d="M620.5,150.5 L652.5,150.5 L652.5,172 L620.5,172 Z" fill="#000" stroke="none"/>
<path d="M623.5,137 L649.5,137 L649.5,150.5 L623.5,150.5 Z" fill="#000" stroke="none"/>
<line x1="623.5" y1="137" x2="623.5" y2="150.5" stroke="#ffffff" stroke-width="1" />
<line x1="649.5" y1="137" x2="649.5" y2="150.5" stroke="#ffffff" stroke-width="1" />
<line x1="626.5" y1="137" x2="626.5" y2="150.5" stroke="#ffffff" stroke-width="1" />
<line x1="646.5" y1="137" x2="646.5" y2="150.5" stroke="#ffffff" stroke-width="1" />
<line x1="618.5" y1="150.5" x2="654.5" y2="150.5" stroke="#ffffff" stroke-width="1" />
<line x1="600.5" y1="146" x2="600.5" y2="157" stroke="#00ffff" stroke-width="1" />
<line x1="672.5" y1="146" x2="672.5" y2="157" stroke="#00ffff" stroke-width="1" />
<line x1="621" y1="160" x2="621" y2="167" stroke="#00ffff" stroke-width="1" />
<line x1="652" y1="160" x2="652" y2="167" stroke="#00ffff" stroke-width="1" />
<path d="M600.5,146.5 L621.0,146.5 L621.0,172 L600.5,172 Z" fill="#000" stroke="#fff"/>
<path d="M652.5,146.5 L673.0,146.5 L673.0,172 L652.5,172 Z" fill="#000" stroke="#fff"/>
<path d="M604,150 L611,150 L617,170 L610,170 Z" fill="url(#hb)" stroke="#fff"/>
<path d="M669,150 L662,150 L656,170 L663,170 Z" fill="url(#hb)" stroke="#fff"/>
<rect x="614" y="148" width="6.5" height="23" stroke="none" fill="url(#hb)"/>
<rect x="653" y="148" width="6.5" height="23" stroke="none" fill="url(#hb)"/>
<line x1="605.5" y1="150" x2="613.5" y2="171" stroke="#ff0000" stroke-width="1" />
<line x1="667.5" y1="150" x2="659.5" y2="171" stroke="#ff0000" stroke-width="1" />
<line x1="591.5" y1="128" x2="591.5" y2="157" stroke="#ff0000" stroke-width="1" />
<line x1="681.5" y1="128" x2="681.5" y2="157" stroke="#ff0000" stroke-width="1" />
<rect x="589.5" y="132.5" width="5" height="3" stroke="#ffffff" fill="#000"/>
<rect x="588.5" y="135.5" width="6" height="22" stroke="#ffffff" fill="none"/>
<rect x="590.5" y="137.5" width="2" height="13" stroke="#ffffff" fill="none"/>
<line x1="600" y1="171.5" x2="673" y2="171.5" stroke="#ffffff" stroke-width="1" />
<line x1="617" y1="175.5" x2="656" y2="175.5" stroke="#ffffff" stroke-width="1" />
<path d="M582,177.5 L616.5,177.5 L621.5,183.5 L621.5,198.5 L618,206.5 L582,206.5 Q571,204 570.5,192 Q571,179 582,177.5 Z" fill="#000" stroke="#fff"/>
<path d="M656.5,177.5 L672,177.5 L680,206.5 L654.5,206.5 L650.5,198.5 L650.5,183.5 Z" fill="#000" stroke="#fff"/>
<path d="M616.5,175.5 Q621.5,178 621.5,183.5 L650.5,183.5 Q650.5,178 656.5,175.5 Z" fill="#000" stroke="#fff"/>
<rect x="621.5" y="183.5" width="29" height="15" stroke="#ffffff" fill="#000"/>
<path d="M621.5,198.5 L650.5,198.5 L654.5,206.5 L658,210.5 L615,210.5 L618,206.5 Z" fill="#000" stroke="#fff"/>
<path d="M573.5,206.5 L587.5,206.5 L587.5,234 Q587.5,238.5 580.5,238.5 Q573.5,238.5 573.5,234 Z" fill="#000" stroke="#fff"/>
<line x1="580.5" y1="209" x2="580.5" y2="236" stroke="#ff0000" stroke-width="1" stroke-dasharray="8,3"/>
<line x1="593.5" y1="210.5" x2="679.5" y2="210.5" stroke="#ffffff" stroke-width="1" />
<line x1="593.5" y1="210.5" x2="593.5" y2="241" stroke="#ffffff" stroke-width="1" />
<line x1="679.5" y1="210.5" x2="679.5" y2="241" stroke="#ffffff" stroke-width="1" />
<path d="M615.5,210.5 L657.5,210.5 L657.5,245.5 L615.5,245.5 Z" fill="#000" stroke="#fff"/>
<path d="M598,213 L606,213 L614,240 L604,241 Z" fill="#000" stroke="#fff"/>
<path d="M675,213 L667,213 L659,240 L669,241 Z" fill="#000" stroke="#fff"/>
<line x1="604" y1="215" x2="600" y2="240" stroke="#ff0000" stroke-width="1" />
<line x1="669" y1="215" x2="673" y2="240" stroke="#ff0000" stroke-width="1" />
<line x1="600.5" y1="245.5" x2="672.5" y2="245.5" stroke="#ffffff" stroke-width="1" />
<rect x="561.5" y="223.5" width="32" height="4" fill="#ffffff"/>
<rect x="679.5" y="223.5" width="21" height="4" fill="#ffffff"/>
<line x1="593.5" y1="225.5" x2="679.5" y2="225.5" stroke="#ffffff" stroke-width="1" />
<path d="M569.5,250 Q569.5,247.5 575,247.5 L590,247.5 Q593.5,247 593.5,244 L600.5,245.5 L672.5,245.5 L680,241 L680,245 Q683,248 691.5,248 L691.5,318 Q693,322 700,322.5 L670,322.5 L670,336 L570,336 Z" fill="#000" stroke="#fff"/>
<rect x="689.5" y="216.5" width="9" height="21" stroke="#ffffff" fill="#000"/>
<line x1="694" y1="212" x2="694" y2="238" stroke="#ff0000" stroke-width="1" />
<path d="M613.5,246.5 L657.5,246.5 L652,273.5 L623,273.5 Z" stroke="#ffffff" fill="url(#hb)"/>
<path d="M632,273.5 L636.5,264 L641,273.5 Z" fill="#000" stroke="#fff"/>
<path d="M604,248 L611,246.5 L623,273.5 L615,275 Z" fill="#000" stroke="#fff"/>
<path d="M666,250 L659,246.5 L652,273.5 L660,273.5 Z" fill="#000" stroke="#fff"/>
<line x1="608" y1="250" x2="620" y2="274" stroke="#ff0000" stroke-width="1" />
<line x1="663" y1="252" x2="655" y2="274" stroke="#ff0000" stroke-width="1" />
<path d="M569,332 L586,332 L586,346 L569,346 Z" stroke="none" fill="url(#hb)"/>
<path d="M569,332.5 L580.5,332.5 Q585.5,332 586,327" fill="none" stroke="#fff"/>
<path d="M593.8,255 L604,248 L615,275 L610,281 L614.5,285.5 L614.5,336 L586,336 L586,276 Q586,270.5 591,270 L593.8,269.5 Z" fill="url(#hb)" stroke="#fff"/>
<line x1="581.5" y1="286.5" x2="571" y2="323" stroke="#ffffff" stroke-width="1" />
<path d="M632.5,296.5 L653.5,296.5 L653.5,313 L660,318 L662,336 L632.5,336 Z" stroke="#ffffff" fill="url(#hb)"/>
<line x1="614.5" y1="296.5" x2="653.5" y2="296.5" stroke="#ffffff" stroke-width="1" />
<line x1="623.5" y1="258" x2="623.5" y2="335" stroke="#ff0000" stroke-dasharray="8,3"/>
<rect x="578.5" y="277.5" width="10" height="9" stroke="#ffffff" fill="#000"/>
<rect x="588.5" y="279.5" width="22" height="6" stroke="#ffffff" fill="#000"/>
<line x1="584" y1="282.5" x2="606" y2="282.5" stroke="#ff0000" stroke-width="1" />
<rect x="614.5" y="285.5" width="18" height="50" stroke="#00ffff" fill="none"/>
<path d="M637,281h1v1h-1zM636,282h3v1h-3zM636,283h1v1h-1zM638,283h1v1h-1zM636,284h3v1h-3zM637,285h1v1h-1zM640,281h3v1h-3zM642,282h1v1h-1zM640,283h3v1h-3zM640,284h1v1h-1zM640,285h3v1h-3zM644,281h3v1h-3zM644,282h1v1h-1zM646,282h1v1h-1zM644,283h3v1h-3zM644,284h1v1h-1zM646,284h1v1h-1zM644,285h3v1h-3zM648,281h3v1h-3zM648,282h1v1h-1zM648,283h2v1h-2zM648,284h1v1h-1zM648,285h1v1h-1zM652,281h3v1h-3zM652,282h1v1h-1zM654,282h1v1h-1zM652,283h3v1h-3zM652,284h1v1h-1zM654,284h1v1h-1zM652,285h3v1h-3zM658,281h1v1h-1zM658,282h1v1h-1zM657,283h1v1h-1zM656,284h1v1h-1zM656,285h1v1h-1zM660,281h1v1h-1zM660,282h1v1h-1zM660,283h3v1h-3zM660,284h1v1h-1zM662,284h1v1h-1zM660,285h1v1h-1zM662,285h1v1h-1zM664,281h3v1h-3zM666,282h1v1h-1zM666,283h1v1h-1zM665,284h1v1h-1zM665,285h1v1h-1z" fill="#00ffff"/>
<line x1="636" y1="287.5" x2="668" y2="287.5" stroke="#00ffff" stroke-width="1" />
<line x1="600" y1="156.5" x2="673" y2="156.5" stroke="#00ffff" stroke-width="1" />
<line x1="621" y1="166.5" x2="652" y2="166.5" stroke="#00ffff" stroke-width="1" />
<path d="M628,151h1v1h-1zM627,152h3v1h-3zM627,153h1v1h-1zM629,153h1v1h-1zM627,154h3v1h-3zM628,155h1v1h-1zM631,151h3v1h-3zM631,152h1v1h-1zM633,152h1v1h-1zM631,153h3v1h-3zM633,154h1v1h-1zM631,155h3v1h-3zM635,151h3v1h-3zM635,152h1v1h-1zM637,152h1v1h-1zM635,153h1v1h-1zM637,153h1v1h-1zM635,154h1v1h-1zM637,154h1v1h-1zM635,155h3v1h-3zM639,151h1v1h-1zM641,151h1v1h-1zM639,152h1v1h-1zM641,152h1v1h-1zM639,153h2v1h-2zM639,154h1v1h-1zM641,154h1v1h-1zM639,155h1v1h-1zM641,155h1v1h-1zM643,151h3v1h-3zM645,152h1v1h-1zM645,153h1v1h-1zM644,154h1v1h-1zM644,155h1v1h-1z" fill="#00ffff"/>
<path d="M628,159h1v1h-1zM627,160h3v1h-3zM627,161h1v1h-1zM629,161h1v1h-1zM627,162h3v1h-3zM628,163h1v1h-1zM631,159h1v1h-1zM633,159h1v1h-1zM631,160h1v1h-1zM633,160h1v1h-1zM631,161h3v1h-3zM633,162h1v1h-1zM633,163h1v1h-1zM635,159h3v1h-3zM635,160h1v1h-1zM637,160h1v1h-1zM635,161h1v1h-1zM637,161h1v1h-1zM635,162h1v1h-1zM637,162h1v1h-1zM635,163h3v1h-3zM639,159h3v1h-3zM639,160h1v1h-1zM641,160h1v1h-1zM639,161h3v1h-3zM639,162h1v1h-1zM639,163h1v1h-1zM643,159h3v1h-3zM643,160h1v1h-1zM643,161h3v1h-3zM643,162h1v1h-1zM645,162h1v1h-1zM643,163h3v1h-3z" fill="#00ffff"/>
<line x1="592" y1="223.5" x2="680" y2="223.5" stroke="#00ffff" stroke-width="1" />
<line x1="615" y1="239.5" x2="657" y2="239.5" stroke="#00ffff" stroke-width="1" />
<path d="M626,215h1v1h-1zM625,216h3v1h-3zM625,217h1v1h-1zM627,217h1v1h-1zM625,218h3v1h-3zM626,219h1v1h-1zM630,215h1v1h-1zM629,216h2v1h-2zM630,217h1v1h-1zM630,218h1v1h-1zM629,219h3v1h-3zM634,215h1v1h-1zM633,216h2v1h-2zM634,217h1v1h-1zM634,218h1v1h-1zM633,219h3v1h-3zM637,215h3v1h-3zM637,216h1v1h-1zM639,216h1v1h-1zM637,217h1v1h-1zM639,217h1v1h-1zM637,218h1v1h-1zM639,218h1v1h-1zM637,219h3v1h-3zM641,215h1v1h-1zM643,215h1v1h-1zM641,216h1v1h-1zM643,216h1v1h-1zM641,217h2v1h-2zM641,218h1v1h-1zM643,218h1v1h-1zM641,219h1v1h-1zM643,219h1v1h-1zM645,215h3v1h-3zM647,216h1v1h-1zM647,217h1v1h-1zM646,218h1v1h-1zM646,219h1v1h-1z" fill="#00ffff"/>
<path d="M626,232h1v1h-1zM625,233h3v1h-3zM625,234h1v1h-1zM627,234h1v1h-1zM625,235h3v1h-3zM626,236h1v1h-1zM630,232h1v1h-1zM629,233h2v1h-2zM630,234h1v1h-1zM630,235h1v1h-1zM629,236h3v1h-3zM633,232h3v1h-3zM635,233h1v1h-1zM634,234h2v1h-2zM635,235h1v1h-1zM633,236h3v1h-3zM637,232h3v1h-3zM637,233h1v1h-1zM639,233h1v1h-1zM637,234h1v1h-1zM639,234h1v1h-1zM637,235h1v1h-1zM639,235h1v1h-1zM637,236h3v1h-3zM641,232h3v1h-3zM641,233h1v1h-1zM643,233h1v1h-1zM641,234h3v1h-3zM641,235h1v1h-1zM641,236h1v1h-1zM645,232h3v1h-3zM645,233h1v1h-1zM645,234h3v1h-3zM645,235h1v1h-1zM647,235h1v1h-1zM645,236h3v1h-3z" fill="#00ffff"/>
<line x1="636.5" y1="76" x2="636.5" y2="290" stroke="#ff0000" stroke-dasharray="27,4,6,4"/>
<g>
<path d="M447.5,336 L490.5,323.5 L503.5,323.5 L503.5,332.5 L456,342.5 L447.5,342.5 Z" stroke="#ffffff" fill="url(#hb)"/>
<rect x="447.5" y="342.5" width="8.5" height="6" stroke="#ffffff" fill="url(#hb)"/>
<line x1="447.5" y1="350.5" x2="620" y2="350.5" stroke="#ffffff" stroke-width="1" />
</g><g transform="matrix(1 0 0 -1 0 718.5)">
<path d="M447.5,336 L490.5,323.5 L503.5,323.5 L503.5,332.5 L456,342.5 L447.5,342.5 Z" stroke="#ffffff" fill="url(#hb)"/>
<rect x="447.5" y="342.5" width="8.5" height="6" stroke="#ffffff" fill="url(#hb)"/>
<line x1="447.5" y1="350.5" x2="620" y2="350.5" stroke="#ffffff" stroke-width="1" />
</g>
<path d="M434,336 L444,336 L444,348.5 L431,348.5 L431,347 L434,336 Z" stroke="#ffffff" fill="url(#hb)"/>
<line x1="431" y1="342.5" x2="444" y2="342.5" stroke="#ffffff" stroke-width="1" />
<path d="M432,370 L444,370 L444,382 L442.5,382 Z" stroke="#ffffff" fill="url(#hb)"/>
<line x1="431" y1="348.5" x2="442.5" y2="382" stroke="#ffffff" stroke-width="1" />
<line x1="444.5" y1="336" x2="444.5" y2="382" stroke="#ffffff" stroke-width="1" />
<line x1="447.5" y1="336" x2="447.5" y2="382" stroke="#ffffff" stroke-width="1" />
<rect x="502.5" y="308.5" width="11" height="6" stroke="#ffffff" fill="#000"/>
<line x1="506" y1="308.5" x2="506" y2="314.5" stroke="#ffffff" stroke-width="1" />
<line x1="510" y1="308.5" x2="510" y2="314.5" stroke="#ffffff" stroke-width="1" />
<rect x="500.5" y="314.5" width="13" height="6" stroke="#ffffff" fill="#000"/>
<rect x="505.5" y="320.5" width="6" height="12" stroke="#ffffff" fill="#000"/>
<line x1="508.5" y1="304" x2="508.5" y2="343" stroke="#ff0000" stroke-width="1" />
<rect x="505.5" y="385.5" width="6" height="12" stroke="#ffffff" fill="#000"/>
<rect x="500.5" y="397.5" width="13" height="6" stroke="#ffffff" fill="#000"/>
<rect x="502.5" y="403.5" width="11" height="6" stroke="#ffffff" fill="#000"/>
<line x1="506" y1="403.5" x2="506" y2="409.5" stroke="#ffffff" stroke-width="1" />
<line x1="510" y1="403.5" x2="510" y2="409.5" stroke="#ffffff" stroke-width="1" />
<line x1="508.5" y1="376" x2="508.5" y2="413" stroke="#ff0000" stroke-width="1" />
<path d="M512.5,314.5 L553.5,314.5 L557.5,309 L557.5,290 L568.5,290 L568.5,323.5 L512.5,323.5 Z" stroke="none" fill="url(#hb)"/>
<path d="M512.5,314.5 L553.5,314.5 L557.5,309 L557.5,290" stroke="#ffffff" fill="none" />
<line x1="568.5" y1="290" x2="568.5" y2="336" stroke="#ffffff" stroke-width="1" />
<line x1="512.5" y1="323.5" x2="549" y2="323.5" stroke="#ffffff" stroke-width="1" />
<path d="M513.5,385.5 L542.5,385.5 L542.5,393.5 L518.5,393.5 L518.5,398 L513.5,398 Z" stroke="none" fill="url(#hb)"/>
<line x1="503" y1="385.5" x2="542.5" y2="385.5" stroke="#ffffff" stroke-width="1" />
<line x1="495" y1="397.5" x2="518.5" y2="397.5" stroke="#ffffff" stroke-width="1" />
<path d="M540.5,323.5 L550,323.5 L550,344.5 L545,344.5 Q540.5,344.5 540.5,340 Z" fill="url(#hb)" stroke="#fff"/>
<path d="M540.5,392.5 L550,392.5 L550,372.5 L545,372.5 Q540.5,372.5 540.5,377 Z" fill="url(#hb)" stroke="#fff"/>
<line x1="548.5" y1="330" x2="548.5" y2="392" stroke="#ffffff" stroke-width="1" />
<line x1="550.5" y1="323.5" x2="550.5" y2="395" stroke="#ffffff" stroke-width="1" />
<path d="M550.5,323.5 L569.5,323.5 L569.5,338.5 L579,338.5 L579,344.5 L550.5,344.5 Z" stroke="#ffffff" fill="url(#hb)"/>
<path d="M556,327 L567,327 Q570,331 567,335 L556,335 Q553,331 556,327 Z" fill="#000" stroke="#fff"/>
<line x1="553" y1="336" x2="568" y2="330" stroke="#ff0000" stroke-width="1" />
<path d="M550.5,372.5 L569.5,372.5 L569.5,394 L550.5,394 Z" stroke="#ffffff" fill="url(#hb)"/>
<path d="M556,381 L567,381 Q570,386 567,390 L556,390 Q553,386 556,381 Z" fill="#000" stroke="#fff"/>
<line x1="553" y1="382" x2="568" y2="388" stroke="#ff0000" stroke-width="1" />
<path d="M544,393.5 L566,393.5 L566,403.5 L544,403.5 Q539.5,403.5 539.5,398.5 Q539.5,393.5 544,393.5 Z" fill="url(#hb)" stroke="#fff"/>
<line x1="536" y1="398.5" x2="556" y2="398.5" stroke="#ff0000" stroke-width="1" />
<rect x="531.5" y="323.5" width="18" height="70" stroke="#00ffff" fill="none"/>
<line x1="558.5" y1="339.5" x2="558.5" y2="379" stroke="#00ffff" stroke-width="1" />
<line x1="558.5" y1="338.5" x2="579" y2="338.5" stroke="#00ffff" stroke-width="1" />
<path d="M1,0h1v1h-1zM0,1h3v1h-3zM0,2h1v1h-1zM2,2h1v1h-1zM0,3h3v1h-3zM1,4h1v1h-1zM4,0h3v1h-3zM6,1h1v1h-1zM4,2h3v1h-3zM4,3h1v1h-1zM4,4h3v1h-3zM8,0h3v1h-3zM8,1h1v1h-1zM10,1h1v1h-1zM8,2h3v1h-3zM8,3h1v1h-1zM10,3h1v1h-1zM8,4h3v1h-3zM12,0h3v1h-3zM12,1h1v1h-1zM14,1h1v1h-1zM12,2h1v1h-1zM14,2h1v1h-1zM12,3h1v1h-1zM14,3h1v1h-1zM12,4h3v1h-3zM16,0h1v1h-1zM18,0h1v1h-1zM16,1h1v1h-1zM18,1h1v1h-1zM16,2h2v1h-2zM16,3h1v1h-1zM18,3h1v1h-1zM16,4h1v1h-1zM18,4h1v1h-1zM20,0h3v1h-3zM22,1h1v1h-1zM22,2h1v1h-1zM21,3h1v1h-1zM21,4h1v1h-1z" fill="#00ffff" transform="translate(527,376) rotate(-90)"/>
<path d="M1,0h1v1h-1zM0,1h3v1h-3zM0,2h1v1h-1zM2,2h1v1h-1zM0,3h3v1h-3zM1,4h1v1h-1zM4,0h3v1h-3zM6,1h1v1h-1zM4,2h3v1h-3zM4,3h1v1h-1zM4,4h3v1h-3zM8,0h3v1h-3zM8,1h1v1h-1zM10,1h1v1h-1zM8,2h3v1h-3zM8,3h1v1h-1zM10,3h1v1h-1zM8,4h3v1h-3zM12,0h3v1h-3zM12,1h1v1h-1zM14,1h1v1h-1zM12,2h1v1h-1zM14,2h1v1h-1zM12,3h1v1h-1zM14,3h1v1h-1zM12,4h3v1h-3zM16,0h3v1h-3zM16,1h1v1h-1zM18,1h1v1h-1zM16,2h3v1h-3zM16,3h1v1h-1zM16,4h1v1h-1zM20,0h3v1h-3zM20,1h1v1h-1zM20,2h3v1h-3zM20,3h1v1h-1zM22,3h1v1h-1zM20,4h3v1h-3z" fill="#00ffff" transform="translate(553,376) rotate(-90)"/>
<path d="M581,346 L581,318 Q583,311 592,311 L660,311 Q668,312 669,320 L669,333 Q675,337 675,345 L675,373 Q675,383 669,387 L669,398 Q667,408 655,408 L592,408 Q583,407 581,400 L581,372 Z" fill="url(#hb)" stroke="none"/>
<line x1="586" y1="300" x2="586" y2="327" stroke="#ffffff" stroke-width="1" />
<path d="M569,332.5 L580.5,332.5 Q585.5,332 586,327" fill="none" stroke="#fff"/>
<path d="M591.5,319.5 Q593,315 603.5,315 L615,315 M633,315 L648.5,315 Q656,316 656.5,326.5 L656.5,337.5 L667.5,337.5 L667.5,346 M581,346 L581,337.5 L591.5,337.5 L591.5,319.5" fill="none" stroke="#fff"/>
<path d="M581,371.5 L581,380.5 L591.5,380.5 L591.5,398 Q593,403 603.5,403.5 L648.5,403.5 Q656,402 656.5,392 L656.5,380.5 L667.5,380.5 L667.5,371.5" fill="none" stroke="#fff"/>
<rect x="566.5" y="346.5" width="43" height="25" stroke="#ffffff" fill="#000"/>
<line x1="567" y1="348.5" x2="609" y2="348.5" stroke="#ffffff" stroke-width="1" />
<rect x="637.5" y="346.5" width="37" height="25" stroke="#ffffff" fill="#000"/>
<line x1="638" y1="348.5" x2="674" y2="348.5" stroke="#ffffff" stroke-width="1" />
<rect x="615.5" y="295.5" width="17.5" height="40" stroke="#ffffff" fill="#000"/>
<rect x="612.5" y="335.5" width="23" height="46.5" stroke="#ffffff" fill="#000"/>
<rect x="614.5" y="337.5" width="19" height="42.5" stroke="#ffffff" fill="none"/>
<circle cx="623.7" cy="359.2" r="9.2" fill="#000" stroke="#fff" shape-rendering="auto"/>
<circle cx="623.7" cy="359.2" r="7.6" fill="none" stroke="#fff" shape-rendering="auto"/>
<path d="M602,314 L613,314 L613,333 L610,333 Z" fill="#000" stroke="#fff"/>
<path d="M645,314 L634,314 L634,333 L637,333 Z" fill="#000" stroke="#fff"/>
<path d="M610,385 L637,385 L646,403.5 L601,403.5 Z" fill="#000" stroke="#fff"/>
<line x1="623.5" y1="382" x2="623.5" y2="403.5" stroke="#ffffff" stroke-width="1" />
<line x1="601.5" y1="314.5" x2="610.5" y2="332.5" stroke="#ff0000" stroke-width="1" />
<line x1="645.5" y1="315.5" x2="636.5" y2="332.5" stroke="#ff0000" stroke-width="1" />
<line x1="610.5" y1="383" x2="601.5" y2="403" stroke="#ff0000" stroke-width="1" />
<line x1="637" y1="383" x2="645.5" y2="403" stroke="#ff0000" stroke-width="1" />
<path d="M690,295 L700.5,295 L700.5,309 L706,316 L738.5,316 L738.5,321.5 L690,321.5 Z" stroke="none" fill="url(#hb)"/>
<line x1="668" y1="321.5" x2="738.5" y2="321.5" stroke="#ffffff" stroke-width="1" />
<path d="M700.5,295 L700.5,309 Q701,315.5 706,315.5 L738.5,315.5" fill="none" stroke="#fff"/>
<path d="M751.5,315.5 L763,315.5 L765.5,319 L765.5,326 L751.5,326 Z" stroke="#ffffff" fill="url(#hb)"/>
<line x1="719.5" y1="325.5" x2="719.5" y2="392.5" stroke="#ffffff" stroke-width="1" />
<path d="M719.5,325.5 L764,325.5 Q760,336 763.5,348 L772,350.5 Q775,359 772,368 L763.5,370 Q760,382 765.5,392.5 L719.5,392.5" fill="none" stroke="#fff"/>
<line x1="710" y1="350.5" x2="772" y2="350.5" stroke="#ffffff" stroke-width="1" />
<line x1="710" y1="368.5" x2="772" y2="368.5" stroke="#ffffff" stroke-width="1" />
<path d="M719.5,392.5 L765.5,392.5 L765.5,397 L760,402.5 L719.5,402.5 Z" stroke="#ffffff" fill="url(#hb)"/>
<rect x="739.5" y="308.5" width="12" height="17.5" stroke="#ffffff" fill="#000"/>
<line x1="743.5" y1="308.5" x2="743.5" y2="326" stroke="#ffffff" stroke-width="1" />
<line x1="747.5" y1="308.5" x2="747.5" y2="326" stroke="#ffffff" stroke-width="1" />
<line x1="739.5" y1="314.5" x2="751.5" y2="314.5" stroke="#ffffff" stroke-width="1" />
<rect x="739.5" y="392.5" width="12" height="18" stroke="#ffffff" fill="#000"/>
<line x1="743.5" y1="392.5" x2="743.5" y2="410.5" stroke="#ffffff" stroke-width="1" />
<line x1="747.5" y1="392.5" x2="747.5" y2="410.5" stroke="#ffffff" stroke-width="1" />
<line x1="739.5" y1="404.5" x2="751.5" y2="404.5" stroke="#ffffff" stroke-width="1" />
<line x1="745.5" y1="290" x2="745.5" y2="420" stroke="#ff0000" stroke-dasharray="10,3,3,3"/>
<g stroke="#00ff00" fill="none">
<path d="M688.5,322.5 V395.5 M675,330.5 H688.5 M681,339.5 V378.5 M672,339.5 H681 M672,345.5 H695 M672,372.5 H695 M672,378.5 H681 M695.5,339.5 V372.5"/>
<path d="M681,345 H688 V373 H681 Z M695,339 V370" stroke-width="2"/>
<path d="M695.5,393.5 V333.5 L702,328.5 L708.5,333.5 V393.5 Z M695.5,341.5 H708.5 M695.5,361.5 H708.5 M695.5,363.5 H708.5 M697,350.5 H718.5 M697,367.5 H718.5"/>
</g>
<line x1="701.5" y1="325" x2="701.5" y2="412" stroke="#ff0000" stroke-dasharray="10,3,3,3"/>
<path d="M688.5,394.5 H717 V410.5 H712 V402 H694 V410.5 H688.5 Z" fill="#000" stroke="#fff"/>
<rect x="695.5" y="397.5" width="13" height="5" stroke="#ffffff" fill="none"/>
<line x1="715" y1="404.5" x2="724" y2="404.5" stroke="#ff0000" stroke-width="1" />
<path d="M585.5,400 L658.5,400 L658.5,420.5 L604,420.5 Q598,421 597,427 L597,429.5 L592.5,429.5 L592.5,449.5 L589,449.5 Q585.5,449 585.5,445 Z" fill="url(#hb)" stroke="#fff"/>
<rect x="589.5" y="410.5" width="69" height="6.5" stroke="#ffffff" fill="#000"/>
<line x1="623.5" y1="410.5" x2="623.5" y2="417" stroke="#ffffff" stroke-width="1" />
<path d="M579,408.5 L589.5,408.5 L589.5,418 L579,418 Q577,413 579,408.5 Z" fill="#000" stroke="#fff"/>
<line x1="583.5" y1="408.5" x2="583.5" y2="418" stroke="#ffffff" stroke-width="1" />
<path d="M592.5,429.5 L611,429.5 L611,440 L605.5,440 L610.5,442 L602,466 L592.5,462.5 Z" stroke="#ffffff" fill="url(#hb)"/>
<path d="M610.5,442 L619.5,446 L612,469.5 L602,466.5 Z" fill="#000" stroke="#fff"/>
<path d="M578,429.5 L592.5,429.5 L592.5,440 L578,440 Q576,435 578,429.5 Z" fill="#000" stroke="#fff"/>
<line x1="582.5" y1="429.5" x2="582.5" y2="440" stroke="#ffffff" stroke-width="1" />
<rect x="592.5" y="429.5" width="18.5" height="10.5" stroke="#ffffff" fill="none"/>
<line x1="587" y1="435.5" x2="608" y2="435.5" stroke="#ff0000" stroke-width="1" />
<path d="M514.38,399.66 A120,120 0 0 0 739.19,403.47" fill="none" stroke="#fff"/>
<path d="M515.56,399.24 A118.75,118.75 0 0 0 738.03,403.01" fill="none" stroke="#0000ff" stroke-dasharray="3,2"/>
<path d="M516.74,398.83 A117.5,117.5 0 0 0 736.87,402.55" fill="none" stroke="#fff"/>
<path d="M617.5,476.5 H629.5 V480.5 H628.5 V485.5 H619.5 V480.5 H617.5 Z" fill="#000" stroke="#fff"/>
<line x1="623.5" y1="380" x2="623.5" y2="501" stroke="#ff0000" stroke-dasharray="10,3,3,3"/>
<line x1="795.5" y1="55.5" x2="806" y2="55.5" stroke="#00ffff" stroke-width="1" />
<path d="M798,50h3v1h-3zM800,51h1v1h-1zM798,52h3v1h-3zM798,53h1v1h-1zM798,54h3v1h-3zM803,50h1v1h-1zM802,51h2v1h-2zM803,52h1v1h-1zM803,53h1v1h-1zM802,54h3v1h-3z" fill="#00ffff"/>
<line x1="795.5" y1="55.5" x2="685" y2="95" stroke="#00ffff" stroke-width="1" />
<line x1="795.5" y1="86.5" x2="806" y2="86.5" stroke="#00ffff" stroke-width="1" />
<path d="M798,81h3v1h-3zM800,82h1v1h-1zM798,83h3v1h-3zM798,84h1v1h-1zM798,85h3v1h-3zM802,81h3v1h-3zM804,82h1v1h-1zM802,83h3v1h-3zM802,84h1v1h-1zM802,85h3v1h-3z" fill="#00ffff"/>
<line x1="795.5" y1="86.5" x2="669" y2="117" stroke="#00ffff" stroke-width="1" />
<line x1="795.5" y1="101.5" x2="806" y2="101.5" stroke="#00ffff" stroke-width="1" />
<path d="M798,96h3v1h-3zM800,97h1v1h-1zM798,98h3v1h-3zM798,99h1v1h-1zM798,100h3v1h-3zM802,96h3v1h-3zM804,97h1v1h-1zM803,98h2v1h-2zM804,99h1v1h-1zM802,100h3v1h-3z" fill="#00ffff"/>
<line x1="795.5" y1="101.5" x2="670" y2="128" stroke="#00ffff" stroke-width="1" />
<line x1="795.5" y1="135.5" x2="806" y2="135.5" stroke="#00ffff" stroke-width="1" />
<path d="M798,130h3v1h-3zM800,131h1v1h-1zM798,132h3v1h-3zM798,133h1v1h-1zM798,134h3v1h-3zM802,130h1v1h-1zM804,130h1v1h-1zM802,131h1v1h-1zM804,131h1v1h-1zM802,132h3v1h-3zM804,133h1v1h-1zM804,134h1v1h-1z" fill="#00ffff"/>
<line x1="795.5" y1="135.5" x2="677" y2="160" stroke="#00ffff" stroke-width="1" />
<line x1="795.5" y1="161.5" x2="806" y2="161.5" stroke="#00ffff" stroke-width="1" />
<path d="M798,156h3v1h-3zM800,157h1v1h-1zM798,158h3v1h-3zM798,159h1v1h-1zM798,160h3v1h-3zM802,156h3v1h-3zM802,157h1v1h-1zM802,158h3v1h-3zM804,159h1v1h-1zM802,160h3v1h-3z" fill="#00ffff"/>
<line x1="795.5" y1="161.5" x2="685" y2="209" stroke="#00ffff" stroke-width="1" />
<line x1="795.5" y1="178.5" x2="806" y2="178.5" stroke="#00ffff" stroke-width="1" />
<path d="M798,173h3v1h-3zM800,174h1v1h-1zM798,175h3v1h-3zM798,176h1v1h-1zM798,177h3v1h-3zM802,173h3v1h-3zM802,174h1v1h-1zM802,175h3v1h-3zM802,176h1v1h-1zM804,176h1v1h-1zM802,177h3v1h-3z" fill="#00ffff"/>
<line x1="795.5" y1="178.5" x2="681" y2="220" stroke="#00ffff" stroke-width="1" />
<line x1="795.5" y1="188.5" x2="806" y2="188.5" stroke="#00ffff" stroke-width="1" />
<path d="M798,183h3v1h-3zM800,184h1v1h-1zM798,185h3v1h-3zM798,186h1v1h-1zM798,187h3v1h-3zM802,183h3v1h-3zM804,184h1v1h-1zM804,185h1v1h-1zM803,186h1v1h-1zM803,187h1v1h-1z" fill="#00ffff"/>
<line x1="795.5" y1="188.5" x2="701" y2="223" stroke="#00ffff" stroke-width="1" />
<line x1="795.5" y1="198.5" x2="806" y2="198.5" stroke="#00ffff" stroke-width="1" />
<path d="M798,193h3v1h-3zM800,194h1v1h-1zM798,195h3v1h-3zM798,196h1v1h-1zM798,197h3v1h-3zM802,193h3v1h-3zM802,194h1v1h-1zM804,194h1v1h-1zM802,195h3v1h-3zM802,196h1v1h-1zM804,196h1v1h-1zM802,197h3v1h-3z" fill="#00ffff"/>
<line x1="795.5" y1="198.5" x2="642" y2="258" stroke="#00ffff" stroke-width="1" />
<line x1="795.5" y1="219.5" x2="806" y2="219.5" stroke="#00ffff" stroke-width="1" />
<path d="M798,214h3v1h-3zM800,215h1v1h-1zM798,216h3v1h-3zM798,217h1v1h-1zM798,218h3v1h-3zM802,214h3v1h-3zM802,215h1v1h-1zM804,215h1v1h-1zM802,216h3v1h-3zM804,217h1v1h-1zM802,218h3v1h-3z" fill="#00ffff"/>
<line x1="795.5" y1="219.5" x2="605" y2="271" stroke="#00ffff" stroke-width="1" />
<line x1="795.5" y1="234.5" x2="806" y2="234.5" stroke="#00ffff" stroke-width="1" />
<path d="M798,229h3v1h-3zM800,230h1v1h-1zM799,231h2v1h-2zM800,232h1v1h-1zM798,233h3v1h-3zM802,229h3v1h-3zM802,230h1v1h-1zM804,230h1v1h-1zM802,231h1v1h-1zM804,231h1v1h-1zM802,232h1v1h-1zM804,232h1v1h-1zM802,233h3v1h-3z" fill="#00ffff"/>
<line x1="795.5" y1="234.5" x2="626" y2="307" stroke="#00ffff" stroke-width="1" />
<line x1="795.5" y1="250.5" x2="806" y2="250.5" stroke="#00ffff" stroke-width="1" />
<path d="M798,245h3v1h-3zM800,246h1v1h-1zM799,247h2v1h-2zM800,248h1v1h-1zM798,249h3v1h-3zM803,245h1v1h-1zM802,246h2v1h-2zM803,247h1v1h-1zM803,248h1v1h-1zM802,249h3v1h-3z" fill="#00ffff"/>
<line x1="795.5" y1="250.5" x2="642" y2="316" stroke="#00ffff" stroke-width="1" />
<line x1="791" y1="321.5" x2="805" y2="321.5" stroke="#00ffff" stroke-width="1" />
<path d="M794,316h3v1h-3zM796,317h1v1h-1zM795,318h2v1h-2zM796,319h1v1h-1zM794,320h3v1h-3zM798,316h3v1h-3zM800,317h1v1h-1zM798,318h3v1h-3zM798,319h1v1h-1zM798,320h3v1h-3z" fill="#00ffff"/>
<line x1="791" y1="321.5" x2="757" y2="357" stroke="#00ffff" stroke-width="1" />
<line x1="523" y1="474.5" x2="537" y2="474.5" stroke="#00ffff" stroke-width="1" />
<path d="M526,469h3v1h-3zM528,470h1v1h-1zM527,471h2v1h-2zM528,472h1v1h-1zM526,473h3v1h-3zM530,469h3v1h-3zM530,470h1v1h-1zM530,471h3v1h-3zM530,472h1v1h-1zM532,472h1v1h-1zM530,473h3v1h-3z" fill="#00ffff"/>
<line x1="537" y1="474.5" x2="588" y2="323" stroke="#00ffff" stroke-width="1" />
<line x1="544" y1="474.5" x2="558" y2="474.5" stroke="#00ffff" stroke-width="1" />
<path d="M547,469h3v1h-3zM549,470h1v1h-1zM548,471h2v1h-2zM549,472h1v1h-1zM547,473h3v1h-3zM551,469h3v1h-3zM551,470h1v1h-1zM551,471h3v1h-3zM553,472h1v1h-1zM551,473h3v1h-3z" fill="#00ffff"/>
<line x1="558" y1="474.5" x2="611" y2="321" stroke="#00ffff" stroke-width="1" />
<line x1="684" y1="474.5" x2="698" y2="474.5" stroke="#00ffff" stroke-width="1" />
<path d="M687,469h3v1h-3zM689,470h1v1h-1zM688,471h2v1h-2zM689,472h1v1h-1zM687,473h3v1h-3zM691,469h1v1h-1zM693,469h1v1h-1zM691,470h1v1h-1zM693,470h1v1h-1zM691,471h3v1h-3zM693,472h1v1h-1zM693,473h1v1h-1z" fill="#00ffff"/>
<line x1="684" y1="474.5" x2="656" y2="409" stroke="#00ffff" stroke-width="1" />
<line x1="712" y1="474.5" x2="726" y2="474.5" stroke="#00ffff" stroke-width="1" />
<path d="M715,469h3v1h-3zM717,470h1v1h-1zM716,471h2v1h-2zM717,472h1v1h-1zM715,473h3v1h-3zM719,469h3v1h-3zM721,470h1v1h-1zM720,471h2v1h-2zM721,472h1v1h-1zM719,473h3v1h-3z" fill="#00ffff"/>
<line x1="712" y1="474.5" x2="704" y2="451" stroke="#00ffff" stroke-width="1" />
<line x1="184" y1="359.5" x2="820" y2="359.5" stroke="#ff0000" stroke-dasharray="27,4,6,4"/>
<path d="M834.5,502.5 H979 M834.5,508.2 H979 M834.5,513.9 H979 M834.5,519.5 H979 M834.5,525.2 H979 M834.5,530.9 H979 M834.5,536.6 H979 M834.5,542.3 H979 M834.5,547.9 H979 M834.5,553.6 H979 M834.5,559.3 H979 M834.5,565.0 H979 M834.5,570.6 H979 M834.5,576.3 H979 M834.5,582.0 H979 M834.5,587.7 H979 M834.5,593.4 H979 M834.5,599.0 H979 M834.5,604.7 H979 M834.5,610.4 H979 M834.5,616.1 H979 M834.5,621.8 H979 M834.5,627.4 H979 M834.5,633.1 H979 M840.5,502.5 V638.8 M872.5,502.5 V638.8 M902.5,502.5 V638.8 M908.5,502.5 V638.8 M915.5,502.5 V638.8 M945.5,502.5 V638.8 M953.5,502.5 V638.8 M963.5,502.5 V638.8" stroke="#00ff00" fill="none"/>
<rect x="835.5" y="503.8" width="3.5" height="4" fill="url(#tm)"/>
<rect x="842" y="503.8" width="15" height="4" fill="url(#tm)"/>
<rect x="878" y="503.8" width="8" height="4" fill="url(#tm)"/>
<rect x="910" y="503.8" width="2" height="4" fill="url(#tm)"/>
<rect x="835.5" y="509.4791666666667" width="3.5" height="4" fill="url(#tm)"/>
<rect x="842" y="509.4791666666667" width="16" height="4" fill="url(#tm)"/>
<rect x="878" y="509.4791666666667" width="13" height="4" fill="url(#tm)"/>
<rect x="910" y="509.4791666666667" width="2" height="4" fill="url(#tm)"/>
<rect x="921" y="509.4791666666667" width="8" height="4" fill="url(#tm)"/>
<rect x="835.5" y="515.1583333333333" width="3.5" height="4" fill="url(#tm)"/>
<rect x="842" y="515.1583333333333" width="17" height="4" fill="url(#tm)"/>
<rect x="878" y="515.1583333333333" width="9" height="4" fill="url(#tm)"/>
<rect x="910" y="515.1583333333333" width="2" height="4" fill="url(#tm)"/>
<rect x="921" y="515.1583333333333" width="11" height="4" fill="url(#tm)"/>
<rect x="835.5" y="520.8375" width="3.5" height="4" fill="url(#tm)"/>
<rect x="842" y="520.8375" width="18" height="4" fill="url(#tm)"/>
<rect x="878" y="520.8375" width="14" height="4" fill="url(#tm)"/>
<rect x="910" y="520.8375" width="2" height="4" fill="url(#tm)"/>
<rect x="921" y="520.8375" width="5" height="4" fill="url(#tm)"/>
<rect x="835.5" y="526.5166666666667" width="3.5" height="4" fill="url(#tm)"/>
<rect x="842" y="526.5166666666667" width="19" height="4" fill="url(#tm)"/>
<rect x="878" y="526.5166666666667" width="10" height="4" fill="url(#tm)"/>
<rect x="910" y="526.5166666666667" width="2" height="4" fill="url(#tm)"/>
<rect x="921" y="526.5166666666667" width="8" height="4" fill="url(#tm)"/>
<rect x="835.5" y="532.1958333333333" width="3.5" height="4" fill="url(#tm)"/>
<rect x="842" y="532.1958333333333" width="20" height="4" fill="url(#tm)"/>
<rect x="878" y="532.1958333333333" width="15" height="4" fill="url(#tm)"/>
<rect x="910" y="532.1958333333333" width="2" height="4" fill="url(#tm)"/>
<rect x="921" y="532.1958333333333" width="11" height="4" fill="url(#tm)"/>
<rect x="835.5" y="537.875" width="3.5" height="4" fill="url(#tm)"/>
<rect x="842" y="537.875" width="15" height="4" fill="url(#tm)"/>
<rect x="878" y="537.875" width="11" height="4" fill="url(#tm)"/>
<rect x="910" y="537.875" width="2" height="4" fill="url(#tm)"/>
<rect x="921" y="537.875" width="5" height="4" fill="url(#tm)"/>
<rect x="835.5" y="543.5541666666667" width="3.5" height="4" fill="url(#tm)"/>
<rect x="842" y="543.5541666666667" width="16" height="4" fill="url(#tm)"/>
<rect x="878" y="543.5541666666667" width="16" height="4" fill="url(#tm)"/>
<rect x="910" y="543.5541666666667" width="2" height="4" fill="url(#tm)"/>
<rect x="835.5" y="549.2333333333333" width="3.5" height="4" fill="url(#tm)"/>
<rect x="842" y="549.2333333333333" width="17" height="4" fill="url(#tm)"/>
<rect x="878" y="549.2333333333333" width="12" height="4" fill="url(#tm)"/>
<rect x="910" y="549.2333333333333" width="2" height="4" fill="url(#tm)"/>
<rect x="921" y="549.2333333333333" width="11" height="4" fill="url(#tm)"/>
<rect x="835.5" y="554.9124999999999" width="3.5" height="4" fill="url(#tm)"/>
<rect x="842" y="554.9124999999999" width="18" height="4" fill="url(#tm)"/>
<rect x="878" y="554.9124999999999" width="8" height="4" fill="url(#tm)"/>
<rect x="910" y="554.9124999999999" width="2" height="4" fill="url(#tm)"/>
<rect x="921" y="554.9124999999999" width="5" height="4" fill="url(#tm)"/>
<rect x="835.5" y="560.5916666666666" width="3.5" height="4" fill="url(#tm)"/>
<rect x="842" y="560.5916666666666" width="19" height="4" fill="url(#tm)"/>
<rect x="878" y="560.5916666666666" width="13" height="4" fill="url(#tm)"/>
<rect x="910" y="560.5916666666666" width="2" height="4" fill="url(#tm)"/>
<rect x="921" y="560.5916666666666" width="8" height="4" fill="url(#tm)"/>
<rect x="835.5" y="566.2708333333333" width="3.5" height="4" fill="url(#tm)"/>
<rect x="842" y="566.2708333333333" width="20" height="4" fill="url(#tm)"/>
<rect x="878" y="566.2708333333333" width="9" height="4" fill="url(#tm)"/>
<rect x="910" y="566.2708333333333" width="2" height="4" fill="url(#tm)"/>
<rect x="921" y="566.2708333333333" width="11" height="4" fill="url(#tm)"/>
<rect x="835.5" y="571.9499999999999" width="3.5" height="4" fill="url(#tm)"/>
<rect x="842" y="571.9499999999999" width="15" height="4" fill="url(#tm)"/>
<rect x="878" y="571.9499999999999" width="14" height="4" fill="url(#tm)"/>
<rect x="910" y="571.9499999999999" width="2" height="4" fill="url(#tm)"/>
<rect x="921" y="571.9499999999999" width="5" height="4" fill="url(#tm)"/>
<rect x="835.5" y="577.6291666666666" width="3.5" height="4" fill="url(#tm)"/>
<rect x="842" y="577.6291666666666" width="16" height="4" fill="url(#tm)"/>
<rect x="878" y="577.6291666666666" width="10" height="4" fill="url(#tm)"/>
<rect x="910" y="577.6291666666666" width="2" height="4" fill="url(#tm)"/>
<rect x="921" y="577.6291666666666" width="8" height="4" fill="url(#tm)"/>
<rect x="835.5" y="583.3083333333333" width="3.5" height="4" fill="url(#tm)"/>
<rect x="842" y="583.3083333333333" width="17" height="4" fill="url(#tm)"/>
<rect x="878" y="583.3083333333333" width="15" height="4" fill="url(#tm)"/>
<rect x="910" y="583.3083333333333" width="2" height="4" fill="url(#tm)"/>
<rect x="835.5" y="588.9875" width="3.5" height="4" fill="url(#tm)"/>
<rect x="842" y="588.9875" width="18" height="4" fill="url(#tm)"/>
<rect x="878" y="588.9875" width="11" height="4" fill="url(#tm)"/>
<rect x="910" y="588.9875" width="2" height="4" fill="url(#tm)"/>
<rect x="921" y="588.9875" width="5" height="4" fill="url(#tm)"/>
<rect x="835.5" y="594.6666666666666" width="3.5" height="4" fill="url(#tm)"/>
<rect x="842" y="594.6666666666666" width="19" height="4" fill="url(#tm)"/>
<rect x="878" y="594.6666666666666" width="16" height="4" fill="url(#tm)"/>
<rect x="910" y="594.6666666666666" width="2" height="4" fill="url(#tm)"/>
<rect x="921" y="594.6666666666666" width="8" height="4" fill="url(#tm)"/>
<rect x="835.5" y="600.3458333333333" width="3.5" height="4" fill="url(#tm)"/>
<rect x="842" y="600.3458333333333" width="20" height="4" fill="url(#tm)"/>
<rect x="878" y="600.3458333333333" width="12" height="4" fill="url(#tm)"/>
<rect x="910" y="600.3458333333333" width="2" height="4" fill="url(#tm)"/>
<rect x="921" y="600.3458333333333" width="11" height="4" fill="url(#tm)"/>
<rect x="835.5" y="606.025" width="3.5" height="4" fill="url(#tm)"/>
<rect x="842" y="606.025" width="15" height="4" fill="url(#tm)"/>
<rect x="878" y="606.025" width="8" height="4" fill="url(#tm)"/>
<rect x="910" y="606.025" width="2" height="4" fill="url(#tm)"/>
<rect x="921" y="606.025" width="5" height="4" fill="url(#tm)"/>
<rect x="835.5" y="611.7041666666667" width="3.5" height="4" fill="url(#tm)"/>
<rect x="842" y="611.7041666666667" width="16" height="4" fill="url(#tm)"/>
<rect x="878" y="611.7041666666667" width="13" height="4" fill="url(#tm)"/>
<rect x="910" y="611.7041666666667" width="2" height="4" fill="url(#tm)"/>
<rect x="921" y="611.7041666666667" width="8" height="4" fill="url(#tm)"/>
<rect x="835.5" y="617.3833333333333" width="3.5" height="4" fill="url(#tm)"/>
<rect x="842" y="617.3833333333333" width="17" height="4" fill="url(#tm)"/>
<rect x="878" y="617.3833333333333" width="9" height="4" fill="url(#tm)"/>
<rect x="910" y="617.3833333333333" width="2" height="4" fill="url(#tm)"/>
<rect x="921" y="617.3833333333333" width="11" height="4" fill="url(#tm)"/>
<rect x="835.5" y="623.0625" width="3.5" height="4" fill="url(#tm)"/>
<rect x="842" y="623.0625" width="18" height="4" fill="url(#tm)"/>
<rect x="878" y="623.0625" width="14" height="4" fill="url(#tm)"/>
<rect x="910" y="623.0625" width="2" height="4" fill="url(#tm)"/>
<rect x="835.5" y="628.7416666666667" width="3.5" height="4" fill="url(#tm)"/>
<rect x="842" y="628.7416666666667" width="19" height="4" fill="url(#tm)"/>
<rect x="878" y="628.7416666666667" width="10" height="4" fill="url(#tm)"/>
<rect x="910" y="628.7416666666667" width="2" height="4" fill="url(#tm)"/>
<rect x="921" y="628.7416666666667" width="8" height="4" fill="url(#tm)"/>
<rect x="835.5" y="634.4208333333333" width="3.5" height="4" fill="url(#tm)"/>
<rect x="842" y="634.4208333333333" width="20" height="4" fill="url(#tm)"/>
<rect x="878" y="634.4208333333333" width="15" height="4" fill="url(#tm)"/>
<rect x="910" y="634.4208333333333" width="2" height="4" fill="url(#tm)"/>
<rect x="921" y="634.4208333333333" width="11" height="4" fill="url(#tm)"/>
<path d="M688,639 H979 M834.5,645 H979 M834.5,502 V689" stroke="#fff" stroke-width="1.2" fill="none"/>
<rect x="836" y="640.3" width="4" height="4" fill="url(#tm)"/>
<rect x="846" y="640.3" width="3" height="4" fill="url(#tm)"/>
<rect x="856" y="640.3" width="3" height="4" fill="url(#tm)"/>
<rect x="884" y="640.3" width="4" height="4" fill="url(#tm)"/>
<rect x="894" y="640.3" width="4" height="4" fill="url(#tm)"/>
<rect x="910" y="640.3" width="5" height="4" fill="url(#tm)"/>
<rect x="920" y="640.3" width="3" height="4" fill="url(#tm)"/>
<rect x="931" y="640.3" width="3" height="4" fill="url(#tm)"/>
<rect x="940" y="640.3" width="3" height="4" fill="url(#tm)"/>
<rect x="948" y="640.3" width="3" height="4" fill="url(#tm)"/>
<rect x="956" y="640.3" width="3" height="4" fill="url(#tm)"/>
<rect x="962" y="640.3" width="3" height="4" fill="url(#tm)"/>
<rect x="968" y="640.3" width="3" height="4" fill="url(#tm)"/>
<rect x="975" y="640.3" width="3" height="4" fill="url(#tm)"/>
<path d="M688.2,622.4 H834.5 M688.2,628.2 H834.5 M688.2,633.8 H834.5 M688.2,644.8 H834.5 M688.2,650.4 H834.5 M688.2,655.9 H834.5 M688.2,661.5 H834.5 M688.2,667.3 H834.5 M688.2,672.9 H834.5 M688.2,678.4 H834.5 M688.2,684.1 H834.5 M695.5,622 V689 M727.5,622 V689 M763.5,622 V689 M769.5,622 V689 M800.5,622 V689 M808.5,622 V689 M818.5,622 V689" stroke="#00ff00" fill="none"/>
<path d="M688.5,622 V690" stroke="#fff" fill="none"/>
<rect x="690" y="623.6" width="4" height="4" fill="url(#tm)"/>
<rect x="697" y="623.6" width="19" height="4" fill="url(#tm)"/>
<rect x="736" y="623.6" width="10" height="4" fill="url(#tm)"/>
<rect x="765.5" y="623.6" width="2.5" height="4" fill="url(#tm)"/>
<rect x="776" y="623.6" width="8" height="4" fill="url(#tm)"/>
<rect x="690" y="629.4000000000001" width="4" height="4" fill="url(#tm)"/>
<rect x="697" y="629.4000000000001" width="22" height="4" fill="url(#tm)"/>
<rect x="736" y="629.4000000000001" width="15" height="4" fill="url(#tm)"/>
<rect x="765.5" y="629.4000000000001" width="2.5" height="4" fill="url(#tm)"/>
<rect x="776" y="629.4000000000001" width="15" height="4" fill="url(#tm)"/>
<rect x="690" y="635.0" width="4" height="4" fill="url(#tm)"/>
<rect x="697" y="635.0" width="21" height="4" fill="url(#tm)"/>
<rect x="736" y="635.0" width="13" height="4" fill="url(#tm)"/>
<rect x="765.5" y="635.0" width="2.5" height="4" fill="url(#tm)"/>
<rect x="776" y="635.0" width="14" height="4" fill="url(#tm)"/>
<rect x="690" y="640.5" width="4" height="4" fill="url(#tm)"/>
<rect x="697" y="640.5" width="20" height="4" fill="url(#tm)"/>
<rect x="736" y="640.5" width="11" height="4" fill="url(#tm)"/>
<rect x="765.5" y="640.5" width="2.5" height="4" fill="url(#tm)"/>
<rect x="776" y="640.5" width="13" height="4" fill="url(#tm)"/>
<rect x="690" y="646.0" width="4" height="4" fill="url(#tm)"/>
<rect x="697" y="646.0" width="19" height="4" fill="url(#tm)"/>
<rect x="736" y="646.0" width="16" height="4" fill="url(#tm)"/>
<rect x="765.5" y="646.0" width="2.5" height="4" fill="url(#tm)"/>
<rect x="776" y="646.0" width="12" height="4" fill="url(#tm)"/>
<rect x="690" y="651.6" width="4" height="4" fill="url(#tm)"/>
<rect x="697" y="651.6" width="22" height="4" fill="url(#tm)"/>
<rect x="736" y="651.6" width="14" height="4" fill="url(#tm)"/>
<rect x="765.5" y="651.6" width="2.5" height="4" fill="url(#tm)"/>
<rect x="776" y="651.6" width="11" height="4" fill="url(#tm)"/>
<rect x="690" y="657.1" width="4" height="4" fill="url(#tm)"/>
<rect x="697" y="657.1" width="21" height="4" fill="url(#tm)"/>
<rect x="736" y="657.1" width="12" height="4" fill="url(#tm)"/>
<rect x="765.5" y="657.1" width="2.5" height="4" fill="url(#tm)"/>
<rect x="776" y="657.1" width="10" height="4" fill="url(#tm)"/>
<rect x="690" y="662.7" width="4" height="4" fill="url(#tm)"/>
<rect x="697" y="662.7" width="20" height="4" fill="url(#tm)"/>
<rect x="736" y="662.7" width="10" height="4" fill="url(#tm)"/>
<rect x="765.5" y="662.7" width="2.5" height="4" fill="url(#tm)"/>
<rect x="776" y="662.7" width="9" height="4" fill="url(#tm)"/>
<rect x="690" y="668.5" width="4" height="4" fill="url(#tm)"/>
<rect x="697" y="668.5" width="19" height="4" fill="url(#tm)"/>
<rect x="736" y="668.5" width="15" height="4" fill="url(#tm)"/>
<rect x="765.5" y="668.5" width="2.5" height="4" fill="url(#tm)"/>
<rect x="776" y="668.5" width="8" height="4" fill="url(#tm)"/>
<rect x="690" y="674.1" width="4" height="4" fill="url(#tm)"/>
<rect x="697" y="674.1" width="22" height="4" fill="url(#tm)"/>
<rect x="736" y="674.1" width="13" height="4" fill="url(#tm)"/>
<rect x="765.5" y="674.1" width="2.5" height="4" fill="url(#tm)"/>
<rect x="776" y="674.1" width="15" height="4" fill="url(#tm)"/>
<rect x="690" y="679.6" width="4" height="4" fill="url(#tm)"/>
<rect x="697" y="679.6" width="21" height="4" fill="url(#tm)"/>
<rect x="736" y="679.6" width="11" height="4" fill="url(#tm)"/>
<rect x="765.5" y="679.6" width="2.5" height="4" fill="url(#tm)"/>
<rect x="690" y="685.3000000000001" width="4" height="4" fill="url(#tm)"/>
<rect x="697" y="685.3000000000001" width="20" height="4" fill="url(#tm)"/>
<rect x="736" y="685.3000000000001" width="16" height="4" fill="url(#tm)"/>
<rect x="765.5" y="685.3000000000001" width="2.5" height="4" fill="url(#tm)"/>
<rect x="776" y="685.3000000000001" width="13" height="4" fill="url(#tm)"/>
<path d="M834.5,650.4 H898.7 M834.5,655.9 H898.7 M834.5,661.8 H898.7 M834.5,667.3 H898.7 M834.5,672.9 H898.7 M834.5,678.4 H898.7 M834.5,684.1 H898.7 M842.5,645 V667.3 M850.5,645 V667.3 M858.5,645 V667.3 M876.5,645 V667.3 M885.5,645 V667.3 M843.5,667.3 V689 M852.5,667.3 V689 M866.5,667.3 V689 M876.5,667.3 V689 M885.5,667.3 V689 M898.5,645 V689 M939.5,645 V689 M898.7,667.5 H939.4 M898.7,673 H939.4 M898.7,682.5 H939.4 M919.5,667.3 V689 M929.5,667.3 V682.7 M902.5,673 V682.7 M909.5,673 V682.7 M914.5,673 V682.7 M939.4,659.5 H979 M939.4,675.5 H979" stroke="#00ff00" fill="none"/>
<rect x="835" y="662.5" width="5" height="4.5" fill="url(#tm)"/>
<rect x="843" y="662.5" width="5" height="4.5" fill="url(#tm)"/>
<rect x="852" y="662.5" width="5" height="4.5" fill="url(#tm)"/>
<rect x="860" y="662.5" width="13" height="4.5" fill="url(#tm)"/>
<rect x="878" y="662.5" width="6" height="4.5" fill="url(#tm)"/>
<rect x="887" y="662.5" width="8" height="4.5" fill="url(#tm)"/>
<rect x="835" y="668.5" width="5" height="4.5" fill="url(#tm)"/>
<rect x="844" y="668.5" width="7" height="4.5" fill="url(#tm)"/>
<rect x="853" y="668.5" width="12" height="4.5" fill="url(#tm)"/>
<rect x="867" y="668.5" width="8" height="4.5" fill="url(#tm)"/>
<rect x="835" y="674" width="5" height="4" fill="url(#tm)"/>
<rect x="835" y="679.5" width="5" height="4" fill="url(#tm)"/>
<rect x="844" y="679.5" width="7" height="4" fill="url(#tm)"/>
<rect x="835" y="685" width="4" height="4" fill="url(#tm)"/>
<rect x="871" y="685" width="5" height="4" fill="url(#tm)"/>
<rect x="910" y="652" width="15" height="9" fill="url(#tm)"/>
<rect x="902" y="668.5" width="14" height="4" fill="url(#tm)"/>
<rect x="921" y="668.5" width="6" height="4" fill="url(#tm)"/>
<rect x="931" y="668.5" width="6" height="4" fill="url(#tm)"/>
<rect x="931" y="676" width="3" height="3" fill="url(#tm)"/>
<rect x="902" y="684.5" width="3" height="4" fill="url(#tm)"/>
<rect x="909" y="684.5" width="3" height="4" fill="url(#tm)"/>
<rect x="914" y="684.5" width="3" height="4" fill="url(#tm)"/>
<rect x="924" y="684.5" width="3" height="4" fill="url(#tm)"/>
<rect x="931" y="684.5" width="3" height="4" fill="url(#tm)"/>
<rect x="941" y="649" width="37" height="6" fill="url(#tm)"/>
<rect x="951" y="663" width="17" height="7" fill="url(#tm)"/>
<rect x="947" y="680" width="22" height="4" fill="url(#tm)"/>
<rect x="429" y="561" width="17" height="6" fill="url(#tm)"/>
<rect x="399" y="576.5" width="57" height="4.5" fill="url(#tm)"/>
<rect x="399" y="583" width="79" height="4.5" fill="url(#tm)"/>
<rect x="399" y="590" width="139" height="4.5" fill="url(#tm)"/>
<rect x="399" y="597" width="65" height="4.5" fill="url(#tm)"/>
<rect x="399" y="603.5" width="61" height="4.5" fill="url(#tm)"/>
</svg></body></html>
